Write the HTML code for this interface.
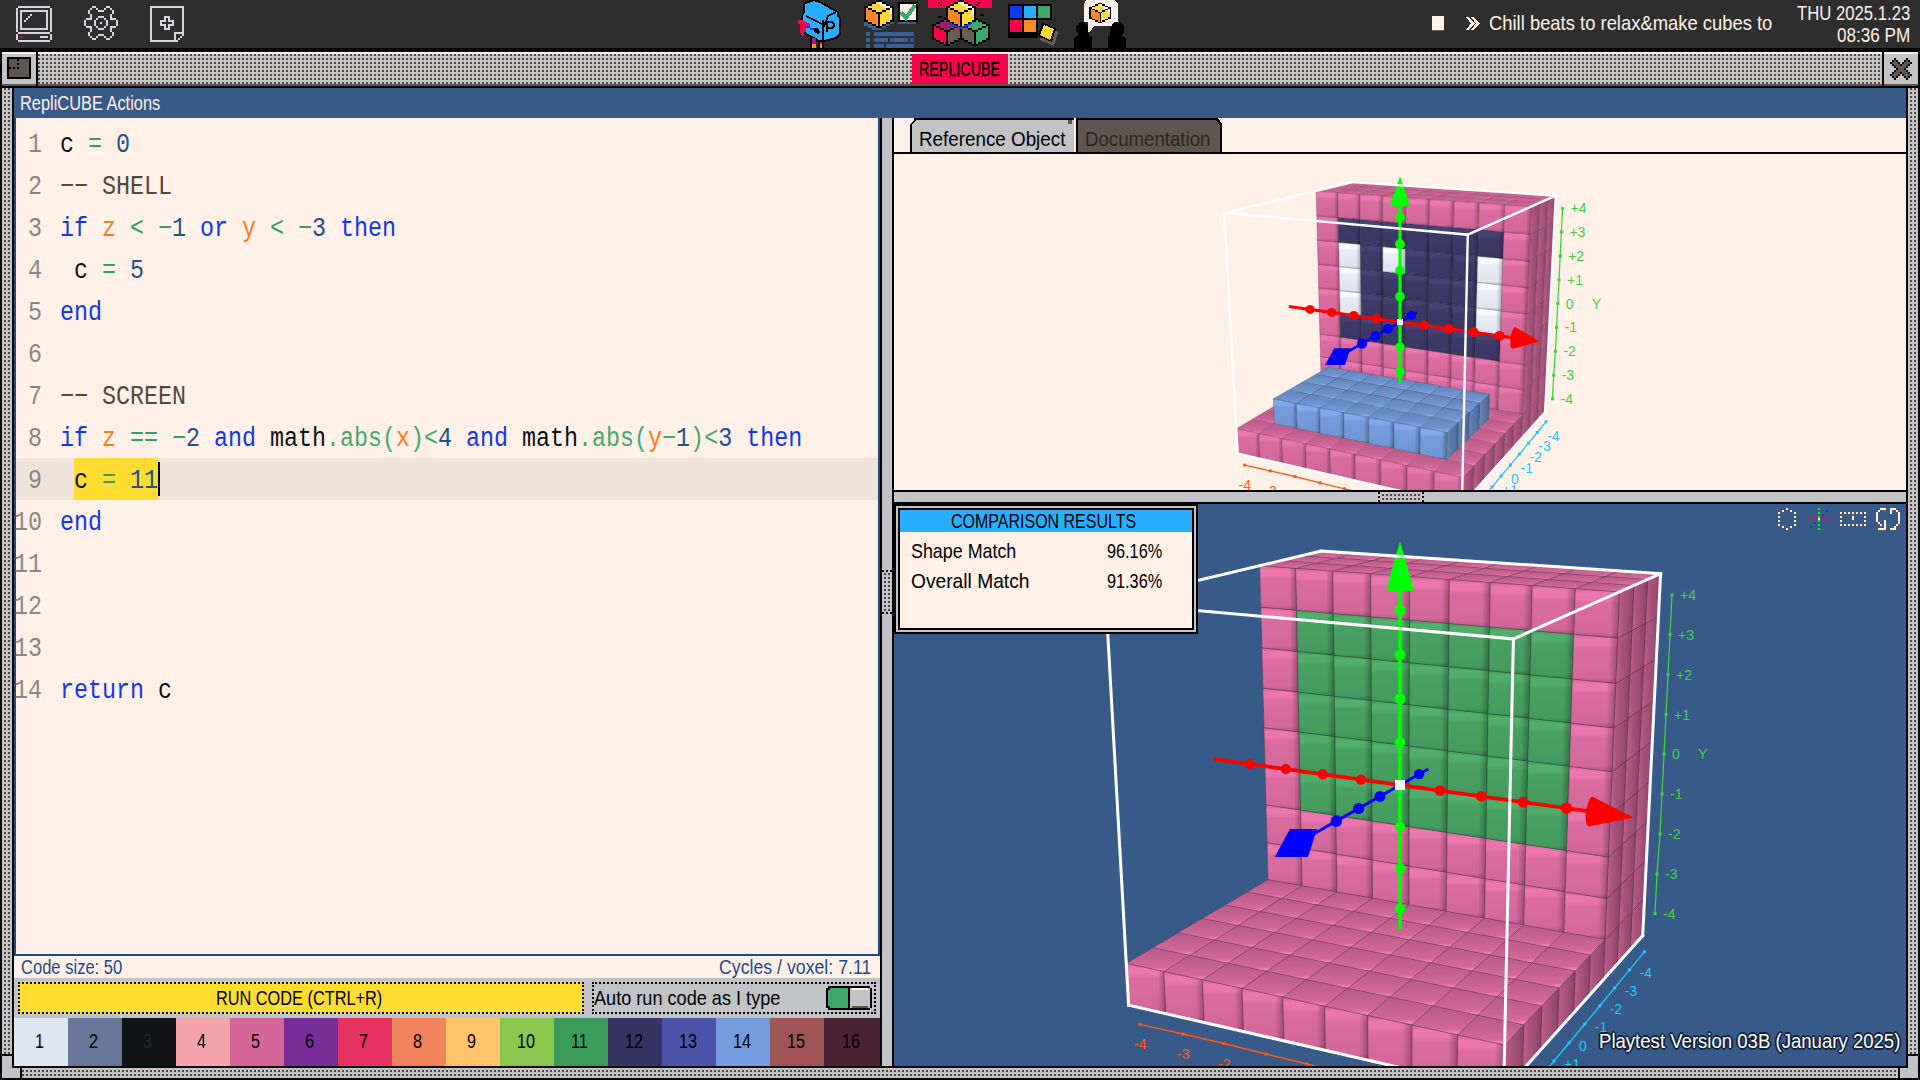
<!DOCTYPE html>
<html><head><meta charset="utf-8">
<style>
*{margin:0;padding:0;box-sizing:border-box}
html,body{width:1920px;height:1080px;overflow:hidden;background:#000}
body{position:relative;font-family:"Liberation Sans",sans-serif}
.abs{position:absolute;display:block}
.dots{background-color:#55493e;background-image:linear-gradient(90deg,#c2c3c7 2px,transparent 2px),linear-gradient(#c2c3c7 2px,transparent 2px);background-size:4px 4px}
.t{position:absolute;white-space:pre;transform-origin:0 0;line-height:1}
.code{position:absolute;left:0;top:0;font-family:"Liberation Mono",monospace;font-size:27px;white-space:pre;line-height:1;transform-origin:0 0}
.kw{color:#1238e6}.nm{color:#24508e}.op{color:#30a060}.vr{color:#ff7a1a}.cm{color:#54483c}.bk{color:#101010}
.ln{color:#8c8682}.op2{color:#48a868}
</style></head><body>
<!-- top bar -->
<div class="abs" style="left:0;top:0;width:1920px;height:48px;background:#2e2e2e"></div>
<svg class="abs" style="left:0;top:0" width="1920" height="48" viewBox="0 0 1920 48" shape-rendering="crispEdges"><rect x="18" y="6" width="32" height="2" fill="#d4d4d8"/><rect x="16" y="8" width="2" height="24" fill="#d4d4d8"/><rect x="50" y="8" width="2" height="24" fill="#d4d4d8"/><rect x="20" y="10" width="28" height="2" fill="#d4d4d8"/><rect x="20" y="28" width="28" height="2" fill="#d4d4d8"/><rect x="20" y="10" width="2" height="20" fill="#d4d4d8"/><rect x="46" y="10" width="2" height="20" fill="#d4d4d8"/><rect x="24" y="20" width="2" height="2" fill="#d4d4d8"/><rect x="26" y="18" width="2" height="2" fill="#d4d4d8"/><rect x="28" y="16" width="2" height="2" fill="#d4d4d8"/><rect x="30" y="14" width="2" height="2" fill="#d4d4d8"/><rect x="18" y="32" width="32" height="2" fill="#d4d4d8"/><rect x="16" y="34" width="2" height="6" fill="#d4d4d8"/><rect x="50" y="34" width="2" height="6" fill="#d4d4d8"/><rect x="18" y="40" width="32" height="2" fill="#d4d4d8"/><rect x="20" y="36" width="2" height="2" fill="#ff004d"/><rect x="40" y="36" width="8" height="2" fill="#d4d4d8"/><rect x="92" y="6" width="4" height="2" fill="#d4d4d8"/><rect x="106" y="6" width="4" height="2" fill="#d4d4d8"/><rect x="90" y="8" width="2" height="2" fill="#d4d4d8"/><rect x="96" y="8" width="2" height="2" fill="#d4d4d8"/><rect x="104" y="8" width="2" height="2" fill="#d4d4d8"/><rect x="110" y="8" width="2" height="2" fill="#d4d4d8"/><rect x="88" y="10" width="2" height="2" fill="#d4d4d8"/><rect x="98" y="10" width="6" height="2" fill="#d4d4d8"/><rect x="112" y="10" width="2" height="2" fill="#d4d4d8"/><rect x="88" y="12" width="2" height="2" fill="#d4d4d8"/><rect x="112" y="12" width="2" height="2" fill="#d4d4d8"/><rect x="90" y="14" width="2" height="2" fill="#d4d4d8"/><rect x="110" y="14" width="2" height="2" fill="#d4d4d8"/><rect x="90" y="16" width="2" height="2" fill="#d4d4d8"/><rect x="98" y="16" width="6" height="2" fill="#d4d4d8"/><rect x="110" y="16" width="2" height="2" fill="#d4d4d8"/><rect x="86" y="18" width="6" height="2" fill="#d4d4d8"/><rect x="96" y="18" width="2" height="2" fill="#d4d4d8"/><rect x="104" y="18" width="2" height="2" fill="#d4d4d8"/><rect x="110" y="18" width="6" height="2" fill="#d4d4d8"/><rect x="84" y="20" width="2" height="2" fill="#d4d4d8"/><rect x="94" y="20" width="2" height="2" fill="#d4d4d8"/><rect x="106" y="20" width="2" height="2" fill="#d4d4d8"/><rect x="116" y="20" width="2" height="2" fill="#d4d4d8"/><rect x="84" y="22" width="2" height="2" fill="#d4d4d8"/><rect x="94" y="22" width="2" height="2" fill="#d4d4d8"/><rect x="100" y="22" width="2" height="2" fill="#d4d4d8"/><rect x="106" y="22" width="2" height="2" fill="#d4d4d8"/><rect x="116" y="22" width="2" height="2" fill="#d4d4d8"/><rect x="84" y="24" width="2" height="2" fill="#d4d4d8"/><rect x="94" y="24" width="2" height="2" fill="#d4d4d8"/><rect x="106" y="24" width="2" height="2" fill="#d4d4d8"/><rect x="116" y="24" width="2" height="2" fill="#d4d4d8"/><rect x="86" y="26" width="6" height="2" fill="#d4d4d8"/><rect x="96" y="26" width="2" height="2" fill="#d4d4d8"/><rect x="104" y="26" width="2" height="2" fill="#d4d4d8"/><rect x="110" y="26" width="6" height="2" fill="#d4d4d8"/><rect x="90" y="28" width="2" height="2" fill="#d4d4d8"/><rect x="98" y="28" width="6" height="2" fill="#d4d4d8"/><rect x="110" y="28" width="2" height="2" fill="#d4d4d8"/><rect x="90" y="30" width="2" height="2" fill="#d4d4d8"/><rect x="110" y="30" width="2" height="2" fill="#d4d4d8"/><rect x="88" y="32" width="2" height="2" fill="#d4d4d8"/><rect x="112" y="32" width="2" height="2" fill="#d4d4d8"/><rect x="88" y="34" width="2" height="2" fill="#d4d4d8"/><rect x="98" y="34" width="6" height="2" fill="#d4d4d8"/><rect x="112" y="34" width="2" height="2" fill="#d4d4d8"/><rect x="90" y="36" width="2" height="2" fill="#d4d4d8"/><rect x="96" y="36" width="2" height="2" fill="#d4d4d8"/><rect x="104" y="36" width="2" height="2" fill="#d4d4d8"/><rect x="110" y="36" width="2" height="2" fill="#d4d4d8"/><rect x="92" y="38" width="4" height="2" fill="#d4d4d8"/><rect x="106" y="38" width="4" height="2" fill="#d4d4d8"/><rect x="150" y="6" width="34" height="2" fill="#d4d4d8"/><rect x="150" y="8" width="2" height="34" fill="#d4d4d8"/><rect x="182" y="8" width="2" height="26" fill="#d4d4d8"/><rect x="152" y="40" width="26" height="2" fill="#d4d4d8"/><rect x="174" y="32" width="8" height="2" fill="#d4d4d8"/><rect x="174" y="34" width="2" height="6" fill="#d4d4d8"/><rect x="182" y="34" width="2" height="2" fill="#d4d4d8"/><rect x="180" y="36" width="2" height="2" fill="#d4d4d8"/><rect x="178" y="38" width="2" height="2" fill="#d4d4d8"/><rect x="176" y="40" width="2" height="2" fill="#d4d4d8"/><rect x="162" y="20" width="2" height="2" fill="#d4d4d8"/><rect x="164" y="18" width="2" height="2" fill="#d4d4d8"/><rect x="164" y="24" width="2" height="2" fill="#d4d4d8"/><rect x="168" y="18" width="2" height="2" fill="#d4d4d8"/><rect x="172" y="24" width="2" height="2" fill="#d4d4d8"/><rect x="168" y="24" width="2" height="2" fill="#d4d4d8"/><rect x="160" y="22" width="2" height="2" fill="#d4d4d8"/><rect x="170" y="20" width="2" height="2" fill="#d4d4d8"/><rect x="164" y="16" width="2" height="2" fill="#d4d4d8"/><rect x="162" y="24" width="2" height="2" fill="#d4d4d8"/><rect x="168" y="16" width="2" height="2" fill="#d4d4d8"/><rect x="164" y="28" width="2" height="2" fill="#d4d4d8"/><rect x="168" y="28" width="2" height="2" fill="#d4d4d8"/><rect x="172" y="22" width="2" height="2" fill="#d4d4d8"/><rect x="160" y="20" width="2" height="2" fill="#d4d4d8"/><rect x="170" y="24" width="2" height="2" fill="#d4d4d8"/><rect x="164" y="20" width="2" height="2" fill="#d4d4d8"/><rect x="164" y="26" width="2" height="2" fill="#d4d4d8"/><rect x="168" y="20" width="2" height="2" fill="#d4d4d8"/><rect x="166" y="16" width="2" height="2" fill="#d4d4d8"/><rect x="166" y="28" width="2" height="2" fill="#d4d4d8"/><rect x="168" y="26" width="2" height="2" fill="#d4d4d8"/><rect x="172" y="20" width="2" height="2" fill="#d4d4d8"/><rect x="160" y="24" width="2" height="2" fill="#d4d4d8"/><polygon points="804,4 808,2 814,0 820,2 834,10 838,12 838,16 840,18 840,34 836,38 828,40 820,42 814,38 806,34 802,30 802,16 804,12" fill="#29adff" stroke="#000" stroke-width="2" stroke-linejoin="miter"/><path d="M806 16 L822 24 L824 26 L828 16 L836 12 M823 20 L823 40" stroke="#000" stroke-width="2" fill="none"/><path d="M827 32 V22 H832 L834 24 V26 L832 28 H828" stroke="#000" stroke-width="2" fill="none"/><polygon points="814,28 818,28 820,32 818,34 814,32" fill="#000" /><polygon points="798,20 802,20 806,22 810,24 810,26 806,26 806,32 804,32 804,36 802,36 800,32 800,24 798,24" fill="#ff004d" /><rect x="806" y="26" width="4" height="2" fill="#0a3cf0"/><rect x="810" y="28" width="4" height="2" fill="#0a3cf0"/><rect x="810" y="38" width="6" height="10" fill="#000"/><rect x="812" y="38" width="4" height="6" fill="#9a2070"/><rect x="812" y="44" width="4" height="4" fill="#ff8a20"/><rect x="818" y="40" width="6" height="8" fill="#000"/><rect x="820" y="42" width="2" height="2" fill="#9a2070"/><rect x="820" y="44" width="2" height="4" fill="#ff8a20"/><rect x="876" y="0" width="6" height="2" fill="#000"/><rect x="872" y="2" width="4" height="2" fill="#000"/><rect x="876" y="2" width="2" height="2" fill="#ffd93a"/><rect x="878" y="2" width="4" height="2" fill="#fff1e8"/><rect x="882" y="2" width="4" height="2" fill="#000"/><rect x="868" y="4" width="4" height="2" fill="#000"/><rect x="872" y="4" width="8" height="2" fill="#ffd93a"/><rect x="880" y="4" width="6" height="2" fill="#fff1e8"/><rect x="886" y="4" width="4" height="2" fill="#000"/><rect x="864" y="6" width="4" height="2" fill="#000"/><rect x="868" y="6" width="16" height="2" fill="#ffd93a"/><rect x="884" y="6" width="6" height="2" fill="#fff1e8"/><rect x="890" y="6" width="4" height="2" fill="#000"/><rect x="864" y="8" width="2" height="2" fill="#000"/><rect x="866" y="8" width="2" height="2" fill="#ff8526"/><rect x="868" y="8" width="4" height="2" fill="#000"/><rect x="872" y="8" width="14" height="2" fill="#ffd93a"/><rect x="886" y="8" width="4" height="2" fill="#000"/><rect x="890" y="8" width="2" height="2" fill="#fff1e8"/><rect x="892" y="8" width="2" height="2" fill="#000"/><rect x="864" y="10" width="2" height="2" fill="#000"/><rect x="866" y="10" width="6" height="2" fill="#ff8526"/><rect x="872" y="10" width="4" height="2" fill="#000"/><rect x="876" y="10" width="6" height="2" fill="#ffd93a"/><rect x="882" y="10" width="4" height="2" fill="#000"/><rect x="886" y="10" width="4" height="2" fill="#ffd93a"/><rect x="890" y="10" width="2" height="2" fill="#fff1e8"/><rect x="892" y="10" width="2" height="2" fill="#000"/><rect x="864" y="12" width="2" height="2" fill="#000"/><rect x="866" y="12" width="10" height="2" fill="#ff8526"/><rect x="876" y="12" width="6" height="2" fill="#000"/><rect x="882" y="12" width="8" height="2" fill="#ffd93a"/><rect x="890" y="12" width="2" height="2" fill="#fff1e8"/><rect x="892" y="12" width="2" height="2" fill="#000"/><rect x="864" y="14" width="2" height="2" fill="#000"/><rect x="866" y="14" width="12" height="2" fill="#ff8526"/><rect x="878" y="14" width="2" height="2" fill="#000"/><rect x="880" y="14" width="12" height="2" fill="#ffd93a"/><rect x="892" y="14" width="2" height="2" fill="#000"/><rect x="864" y="16" width="2" height="2" fill="#000"/><rect x="866" y="16" width="12" height="2" fill="#ff8526"/><rect x="878" y="16" width="2" height="2" fill="#000"/><rect x="880" y="16" width="12" height="2" fill="#ffd93a"/><rect x="892" y="16" width="2" height="2" fill="#000"/><rect x="864" y="18" width="2" height="2" fill="#000"/><rect x="866" y="18" width="12" height="2" fill="#ff8526"/><rect x="878" y="18" width="2" height="2" fill="#000"/><rect x="880" y="18" width="12" height="2" fill="#ffd93a"/><rect x="892" y="18" width="2" height="2" fill="#000"/><rect x="864" y="20" width="4" height="2" fill="#000"/><rect x="868" y="20" width="10" height="2" fill="#ff8526"/><rect x="878" y="20" width="2" height="2" fill="#000"/><rect x="880" y="20" width="10" height="2" fill="#ffd93a"/><rect x="890" y="20" width="4" height="2" fill="#000"/><rect x="864" y="22" width="4" height="2" fill="#3a5f95"/><rect x="868" y="22" width="4" height="2" fill="#000"/><rect x="872" y="22" width="6" height="2" fill="#ff8526"/><rect x="878" y="22" width="2" height="2" fill="#000"/><rect x="880" y="22" width="6" height="2" fill="#ffd93a"/><rect x="886" y="22" width="4" height="2" fill="#000"/><rect x="890" y="22" width="4" height="2" fill="#3a5f95"/><rect x="864" y="24" width="8" height="2" fill="#3a5f95"/><rect x="872" y="24" width="4" height="2" fill="#000"/><rect x="876" y="24" width="2" height="2" fill="#ff8526"/><rect x="878" y="24" width="2" height="2" fill="#000"/><rect x="880" y="24" width="2" height="2" fill="#ffd93a"/><rect x="882" y="24" width="4" height="2" fill="#000"/><rect x="886" y="24" width="4" height="2" fill="#3a5f95"/><rect x="868" y="26" width="8" height="2" fill="#3a5f95"/><rect x="876" y="26" width="6" height="2" fill="#000"/><rect x="882" y="26" width="4" height="2" fill="#3a5f95"/><rect x="872" y="28" width="10" height="2" fill="#3a5f95"/><rect x="898" y="2" width="20" height="20" fill="#000"/><rect x="900" y="4" width="16" height="16" fill="#fff1e8"/><path d="M901 12 L906 18 L915 5" stroke="#3ca86a" stroke-width="4" fill="none"/><rect x="898" y="22" width="18" height="2" fill="#3a5f95"/><rect x="866" y="32" width="4" height="4" fill="#3a5f95"/><rect x="874" y="32" width="40" height="4" fill="#3a5f95"/><rect x="866" y="38" width="4" height="4" fill="#3a5f95"/><rect x="874" y="38" width="14" height="4" fill="#3a5f95"/><rect x="890" y="38" width="18" height="4" fill="#3a5f95"/><rect x="910" y="38" width="4" height="4" fill="#3a5f95"/><rect x="866" y="44" width="4" height="4" fill="#3a5f95"/><rect x="874" y="44" width="10" height="4" fill="#3a5f95"/><rect x="886" y="44" width="28" height="4" fill="#3a5f95"/><rect x="928" y="0" width="64" height="8" fill="#ff004d"/><rect x="938" y="2" width="2" height="2" fill="#000"/><rect x="940" y="4" width="2" height="2" fill="#000"/><rect x="978" y="2" width="2" height="2" fill="#000"/><rect x="976" y="4" width="2" height="2" fill="#000"/><rect x="938" y="16" width="4" height="2" fill="#000"/><rect x="980" y="14" width="4" height="2" fill="#000"/><rect x="944" y="18" width="6" height="2" fill="#000"/><rect x="940" y="20" width="4" height="2" fill="#000"/><rect x="944" y="20" width="2" height="2" fill="#9a2070"/><rect x="946" y="20" width="4" height="2" fill="#ff004d"/><rect x="950" y="20" width="4" height="2" fill="#000"/><rect x="936" y="22" width="4" height="2" fill="#000"/><rect x="940" y="22" width="8" height="2" fill="#9a2070"/><rect x="948" y="22" width="6" height="2" fill="#ff004d"/><rect x="954" y="22" width="4" height="2" fill="#000"/><rect x="932" y="24" width="4" height="2" fill="#000"/><rect x="936" y="24" width="16" height="2" fill="#9a2070"/><rect x="952" y="24" width="6" height="2" fill="#ff004d"/><rect x="958" y="24" width="4" height="2" fill="#000"/><rect x="932" y="26" width="2" height="2" fill="#000"/><rect x="934" y="26" width="2" height="2" fill="#ff004d"/><rect x="936" y="26" width="4" height="2" fill="#000"/><rect x="940" y="26" width="14" height="2" fill="#9a2070"/><rect x="954" y="26" width="4" height="2" fill="#000"/><rect x="958" y="26" width="2" height="2" fill="#ff004d"/><rect x="960" y="26" width="2" height="2" fill="#000"/><rect x="932" y="28" width="2" height="2" fill="#000"/><rect x="934" y="28" width="6" height="2" fill="#ff004d"/><rect x="940" y="28" width="4" height="2" fill="#000"/><rect x="944" y="28" width="6" height="2" fill="#9a2070"/><rect x="950" y="28" width="4" height="2" fill="#000"/><rect x="954" y="28" width="4" height="2" fill="#6a5f55"/><rect x="958" y="28" width="2" height="2" fill="#ff004d"/><rect x="960" y="28" width="2" height="2" fill="#000"/><rect x="932" y="30" width="2" height="2" fill="#000"/><rect x="934" y="30" width="10" height="2" fill="#ff004d"/><rect x="944" y="30" width="6" height="2" fill="#000"/><rect x="950" y="30" width="8" height="2" fill="#6a5f55"/><rect x="958" y="30" width="2" height="2" fill="#ff004d"/><rect x="960" y="30" width="2" height="2" fill="#000"/><rect x="932" y="32" width="2" height="2" fill="#000"/><rect x="934" y="32" width="12" height="2" fill="#ff004d"/><rect x="946" y="32" width="2" height="2" fill="#000"/><rect x="948" y="32" width="12" height="2" fill="#6a5f55"/><rect x="960" y="32" width="2" height="2" fill="#000"/><rect x="932" y="34" width="2" height="2" fill="#000"/><rect x="934" y="34" width="12" height="2" fill="#ff004d"/><rect x="946" y="34" width="2" height="2" fill="#000"/><rect x="948" y="34" width="12" height="2" fill="#6a5f55"/><rect x="960" y="34" width="2" height="2" fill="#000"/><rect x="932" y="36" width="2" height="2" fill="#000"/><rect x="934" y="36" width="12" height="2" fill="#ff004d"/><rect x="946" y="36" width="2" height="2" fill="#000"/><rect x="948" y="36" width="12" height="2" fill="#6a5f55"/><rect x="960" y="36" width="2" height="2" fill="#000"/><rect x="932" y="38" width="4" height="2" fill="#000"/><rect x="936" y="38" width="10" height="2" fill="#ff004d"/><rect x="946" y="38" width="2" height="2" fill="#000"/><rect x="948" y="38" width="10" height="2" fill="#6a5f55"/><rect x="958" y="38" width="4" height="2" fill="#000"/><rect x="936" y="40" width="4" height="2" fill="#000"/><rect x="940" y="40" width="6" height="2" fill="#ff004d"/><rect x="946" y="40" width="2" height="2" fill="#000"/><rect x="948" y="40" width="6" height="2" fill="#6a5f55"/><rect x="954" y="40" width="4" height="2" fill="#000"/><rect x="940" y="42" width="4" height="2" fill="#000"/><rect x="944" y="42" width="2" height="2" fill="#ff004d"/><rect x="946" y="42" width="2" height="2" fill="#000"/><rect x="948" y="42" width="2" height="2" fill="#6a5f55"/><rect x="950" y="42" width="4" height="2" fill="#000"/><rect x="944" y="44" width="6" height="2" fill="#000"/><rect x="972" y="18" width="6" height="2" fill="#000"/><rect x="968" y="20" width="4" height="2" fill="#000"/><rect x="972" y="20" width="2" height="2" fill="#3ca86a"/><rect x="974" y="20" width="4" height="2" fill="#3ca86a"/><rect x="978" y="20" width="4" height="2" fill="#000"/><rect x="964" y="22" width="4" height="2" fill="#000"/><rect x="968" y="22" width="8" height="2" fill="#3ca86a"/><rect x="976" y="22" width="6" height="2" fill="#3ca86a"/><rect x="982" y="22" width="4" height="2" fill="#000"/><rect x="960" y="24" width="4" height="2" fill="#000"/><rect x="964" y="24" width="16" height="2" fill="#3ca86a"/><rect x="980" y="24" width="6" height="2" fill="#3ca86a"/><rect x="986" y="24" width="4" height="2" fill="#000"/><rect x="960" y="26" width="2" height="2" fill="#000"/><rect x="962" y="26" width="2" height="2" fill="#6a5f55"/><rect x="964" y="26" width="4" height="2" fill="#000"/><rect x="968" y="26" width="14" height="2" fill="#3ca86a"/><rect x="982" y="26" width="4" height="2" fill="#000"/><rect x="986" y="26" width="2" height="2" fill="#3ca86a"/><rect x="988" y="26" width="2" height="2" fill="#000"/><rect x="960" y="28" width="2" height="2" fill="#000"/><rect x="962" y="28" width="6" height="2" fill="#6a5f55"/><rect x="968" y="28" width="4" height="2" fill="#000"/><rect x="972" y="28" width="6" height="2" fill="#3ca86a"/><rect x="978" y="28" width="4" height="2" fill="#000"/><rect x="982" y="28" width="4" height="2" fill="#3ca86a"/><rect x="986" y="28" width="2" height="2" fill="#3ca86a"/><rect x="988" y="28" width="2" height="2" fill="#000"/><rect x="960" y="30" width="2" height="2" fill="#000"/><rect x="962" y="30" width="10" height="2" fill="#6a5f55"/><rect x="972" y="30" width="6" height="2" fill="#000"/><rect x="978" y="30" width="8" height="2" fill="#3ca86a"/><rect x="986" y="30" width="2" height="2" fill="#3ca86a"/><rect x="988" y="30" width="2" height="2" fill="#000"/><rect x="960" y="32" width="2" height="2" fill="#000"/><rect x="962" y="32" width="12" height="2" fill="#6a5f55"/><rect x="974" y="32" width="2" height="2" fill="#000"/><rect x="976" y="32" width="12" height="2" fill="#3ca86a"/><rect x="988" y="32" width="2" height="2" fill="#000"/><rect x="960" y="34" width="2" height="2" fill="#000"/><rect x="962" y="34" width="12" height="2" fill="#6a5f55"/><rect x="974" y="34" width="2" height="2" fill="#000"/><rect x="976" y="34" width="12" height="2" fill="#3ca86a"/><rect x="988" y="34" width="2" height="2" fill="#000"/><rect x="960" y="36" width="2" height="2" fill="#000"/><rect x="962" y="36" width="12" height="2" fill="#6a5f55"/><rect x="974" y="36" width="2" height="2" fill="#000"/><rect x="976" y="36" width="12" height="2" fill="#3ca86a"/><rect x="988" y="36" width="2" height="2" fill="#000"/><rect x="960" y="38" width="4" height="2" fill="#000"/><rect x="964" y="38" width="10" height="2" fill="#6a5f55"/><rect x="974" y="38" width="2" height="2" fill="#000"/><rect x="976" y="38" width="10" height="2" fill="#3ca86a"/><rect x="986" y="38" width="4" height="2" fill="#000"/><rect x="964" y="40" width="4" height="2" fill="#000"/><rect x="968" y="40" width="6" height="2" fill="#6a5f55"/><rect x="974" y="40" width="2" height="2" fill="#000"/><rect x="976" y="40" width="6" height="2" fill="#3ca86a"/><rect x="982" y="40" width="4" height="2" fill="#000"/><rect x="968" y="42" width="4" height="2" fill="#000"/><rect x="972" y="42" width="2" height="2" fill="#6a5f55"/><rect x="974" y="42" width="2" height="2" fill="#000"/><rect x="976" y="42" width="2" height="2" fill="#3ca86a"/><rect x="978" y="42" width="4" height="2" fill="#000"/><rect x="972" y="44" width="6" height="2" fill="#000"/><rect x="958" y="0" width="6" height="2" fill="#000"/><rect x="954" y="2" width="4" height="2" fill="#000"/><rect x="958" y="2" width="2" height="2" fill="#ffd93a"/><rect x="960" y="2" width="4" height="2" fill="#fff1e8"/><rect x="964" y="2" width="4" height="2" fill="#000"/><rect x="950" y="4" width="4" height="2" fill="#000"/><rect x="954" y="4" width="8" height="2" fill="#ffd93a"/><rect x="962" y="4" width="6" height="2" fill="#fff1e8"/><rect x="968" y="4" width="4" height="2" fill="#000"/><rect x="946" y="6" width="4" height="2" fill="#000"/><rect x="950" y="6" width="16" height="2" fill="#ffd93a"/><rect x="966" y="6" width="6" height="2" fill="#fff1e8"/><rect x="972" y="6" width="4" height="2" fill="#000"/><rect x="946" y="8" width="2" height="2" fill="#000"/><rect x="948" y="8" width="2" height="2" fill="#ff8526"/><rect x="950" y="8" width="4" height="2" fill="#000"/><rect x="954" y="8" width="14" height="2" fill="#ffd93a"/><rect x="968" y="8" width="4" height="2" fill="#000"/><rect x="972" y="8" width="2" height="2" fill="#fff1e8"/><rect x="974" y="8" width="2" height="2" fill="#000"/><rect x="946" y="10" width="2" height="2" fill="#000"/><rect x="948" y="10" width="6" height="2" fill="#ff8526"/><rect x="954" y="10" width="4" height="2" fill="#000"/><rect x="958" y="10" width="6" height="2" fill="#ffd93a"/><rect x="964" y="10" width="4" height="2" fill="#000"/><rect x="968" y="10" width="4" height="2" fill="#ffd93a"/><rect x="972" y="10" width="2" height="2" fill="#fff1e8"/><rect x="974" y="10" width="2" height="2" fill="#000"/><rect x="946" y="12" width="2" height="2" fill="#000"/><rect x="948" y="12" width="10" height="2" fill="#ff8526"/><rect x="958" y="12" width="6" height="2" fill="#000"/><rect x="964" y="12" width="8" height="2" fill="#ffd93a"/><rect x="972" y="12" width="2" height="2" fill="#fff1e8"/><rect x="974" y="12" width="2" height="2" fill="#000"/><rect x="946" y="14" width="2" height="2" fill="#000"/><rect x="948" y="14" width="12" height="2" fill="#ff8526"/><rect x="960" y="14" width="2" height="2" fill="#000"/><rect x="962" y="14" width="12" height="2" fill="#ffd93a"/><rect x="974" y="14" width="2" height="2" fill="#000"/><rect x="946" y="16" width="2" height="2" fill="#000"/><rect x="948" y="16" width="12" height="2" fill="#ff8526"/><rect x="960" y="16" width="2" height="2" fill="#000"/><rect x="962" y="16" width="12" height="2" fill="#ffd93a"/><rect x="974" y="16" width="2" height="2" fill="#000"/><rect x="946" y="18" width="2" height="2" fill="#000"/><rect x="948" y="18" width="12" height="2" fill="#ff8526"/><rect x="960" y="18" width="2" height="2" fill="#000"/><rect x="962" y="18" width="12" height="2" fill="#ffd93a"/><rect x="974" y="18" width="2" height="2" fill="#000"/><rect x="946" y="20" width="4" height="2" fill="#000"/><rect x="950" y="20" width="10" height="2" fill="#ff8526"/><rect x="960" y="20" width="2" height="2" fill="#000"/><rect x="962" y="20" width="10" height="2" fill="#ffd93a"/><rect x="972" y="20" width="4" height="2" fill="#000"/><rect x="950" y="22" width="4" height="2" fill="#000"/><rect x="954" y="22" width="6" height="2" fill="#ff8526"/><rect x="960" y="22" width="2" height="2" fill="#000"/><rect x="962" y="22" width="6" height="2" fill="#ffd93a"/><rect x="968" y="22" width="4" height="2" fill="#000"/><rect x="954" y="24" width="4" height="2" fill="#000"/><rect x="958" y="24" width="2" height="2" fill="#ff8526"/><rect x="960" y="24" width="2" height="2" fill="#000"/><rect x="962" y="24" width="2" height="2" fill="#ffd93a"/><rect x="964" y="24" width="4" height="2" fill="#000"/><rect x="958" y="26" width="6" height="2" fill="#000"/><path d="M949 23 L955 26 L960 28 L966 26 L972 23" stroke="#0a3cf0" stroke-width="2" fill="none"/><rect x="1008" y="4" width="44" height="34" fill="#000"/><rect x="1010" y="6" width="12" height="12" fill="#0a3cf0"/><rect x="1024" y="6" width="12" height="12" fill="#29adff"/><rect x="1038" y="6" width="12" height="12" fill="#3ca86a"/><rect x="1010" y="20" width="12" height="12" fill="#ff004d"/><rect x="1024" y="20" width="12" height="12" fill="#ff8a20"/><rect x="1038" y="20" width="14" height="18" fill="#2e2e2e"/><polygon points="1044,26 1058,32 1054,46 1040,40" fill="#6a5f55" /><polygon points="1042,22 1056,28 1052,42 1038,36" fill="#000" /><polygon points="1044,25 1054,29 1050,40 1040,35" fill="#ffd93a" /><polygon points="1086,0 1114,0 1118,4 1118,22 1112,26 1094,26 1090,32 1088,32 1088,22 1084,22 1084,4" fill="#fff1e8" /><polygon points="1080,22 1086,22 1088,26 1088,32 1090,36 1092,38 1092,48 1074,48 1074,38 1078,34 1076,30 1076,26" fill="#000" /><polygon points="1114,22 1120,22 1124,26 1124,32 1122,36 1126,38 1126,48 1108,48 1108,38 1110,34 1110,28" fill="#000" /><g transform="translate(1088,3) scale(0.72)"><rect x="14" y="0" width="6" height="2" fill="#000"/><rect x="10" y="2" width="4" height="2" fill="#000"/><rect x="14" y="2" width="2" height="2" fill="#ffd93a"/><rect x="16" y="2" width="4" height="2" fill="#fff1e8"/><rect x="20" y="2" width="4" height="2" fill="#000"/><rect x="6" y="4" width="4" height="2" fill="#000"/><rect x="10" y="4" width="8" height="2" fill="#ffd93a"/><rect x="18" y="4" width="6" height="2" fill="#fff1e8"/><rect x="24" y="4" width="4" height="2" fill="#000"/><rect x="2" y="6" width="4" height="2" fill="#000"/><rect x="6" y="6" width="16" height="2" fill="#ffd93a"/><rect x="22" y="6" width="6" height="2" fill="#fff1e8"/><rect x="28" y="6" width="4" height="2" fill="#000"/><rect x="2" y="8" width="2" height="2" fill="#000"/><rect x="4" y="8" width="2" height="2" fill="#ff8526"/><rect x="6" y="8" width="4" height="2" fill="#000"/><rect x="10" y="8" width="14" height="2" fill="#ffd93a"/><rect x="24" y="8" width="4" height="2" fill="#000"/><rect x="28" y="8" width="2" height="2" fill="#fff1e8"/><rect x="30" y="8" width="2" height="2" fill="#000"/><rect x="2" y="10" width="2" height="2" fill="#000"/><rect x="4" y="10" width="6" height="2" fill="#ff8526"/><rect x="10" y="10" width="4" height="2" fill="#000"/><rect x="14" y="10" width="6" height="2" fill="#ffd93a"/><rect x="20" y="10" width="4" height="2" fill="#000"/><rect x="24" y="10" width="4" height="2" fill="#ffd93a"/><rect x="28" y="10" width="2" height="2" fill="#fff1e8"/><rect x="30" y="10" width="2" height="2" fill="#000"/><rect x="2" y="12" width="2" height="2" fill="#000"/><rect x="4" y="12" width="10" height="2" fill="#ff8526"/><rect x="14" y="12" width="6" height="2" fill="#000"/><rect x="20" y="12" width="8" height="2" fill="#ffd93a"/><rect x="28" y="12" width="2" height="2" fill="#fff1e8"/><rect x="30" y="12" width="2" height="2" fill="#000"/><rect x="2" y="14" width="2" height="2" fill="#000"/><rect x="4" y="14" width="12" height="2" fill="#ff8526"/><rect x="16" y="14" width="2" height="2" fill="#000"/><rect x="18" y="14" width="12" height="2" fill="#ffd93a"/><rect x="30" y="14" width="2" height="2" fill="#000"/><rect x="2" y="16" width="2" height="2" fill="#000"/><rect x="4" y="16" width="12" height="2" fill="#ff8526"/><rect x="16" y="16" width="2" height="2" fill="#000"/><rect x="18" y="16" width="12" height="2" fill="#ffd93a"/><rect x="30" y="16" width="2" height="2" fill="#000"/><rect x="2" y="18" width="2" height="2" fill="#000"/><rect x="4" y="18" width="12" height="2" fill="#ff8526"/><rect x="16" y="18" width="2" height="2" fill="#000"/><rect x="18" y="18" width="12" height="2" fill="#ffd93a"/><rect x="30" y="18" width="2" height="2" fill="#000"/><rect x="2" y="20" width="4" height="2" fill="#000"/><rect x="6" y="20" width="10" height="2" fill="#ff8526"/><rect x="16" y="20" width="2" height="2" fill="#000"/><rect x="18" y="20" width="10" height="2" fill="#ffd93a"/><rect x="28" y="20" width="4" height="2" fill="#000"/><rect x="6" y="22" width="4" height="2" fill="#000"/><rect x="10" y="22" width="6" height="2" fill="#ff8526"/><rect x="16" y="22" width="2" height="2" fill="#000"/><rect x="18" y="22" width="6" height="2" fill="#ffd93a"/><rect x="24" y="22" width="4" height="2" fill="#000"/><rect x="10" y="24" width="4" height="2" fill="#000"/><rect x="14" y="24" width="2" height="2" fill="#ff8526"/><rect x="16" y="24" width="2" height="2" fill="#000"/><rect x="18" y="24" width="2" height="2" fill="#ffd93a"/><rect x="20" y="24" width="4" height="2" fill="#000"/><rect x="14" y="26" width="6" height="2" fill="#000"/></g><rect x="1432" y="16" width="12" height="14" fill="#fff1e8"/><rect x="1432" y="30" width="12" height="1" fill="#6a5f55"/><path d="M1467 17 L1473 23.5 L1467 30 M1472 17 L1478 23.5 L1472 30" stroke="#fff1e8" stroke-width="2.5" fill="none"/></svg>
<!-- title bar -->
<div class="abs" style="left:2px;top:52px;width:34px;height:34px;background:#c2c3c7;border-top:2px solid #fff1e8;border-bottom:2px solid #5f574f"></div>
<div class="abs" style="left:7px;top:57px;width:24px;height:22px;background:#5f574f;border:2px solid #000"></div><svg class="abs" style="left:0;top:0" width="40" height="90" shape-rendering="crispEdges"><path d="M17 59h2v2h-2zM17 63h2v2h-2zM9 67h2v2h-2zM13 67h2v2h-2zM17 67h2v2h-2z" fill="#000"/></svg>
<div class="abs dots" style="left:38px;top:52px;width:1844px;height:34px;border-top:2px solid #fff1e8;border-bottom:2px solid #5f574f;background-position:2px 2px"></div>
<div class="abs" style="left:912px;top:54px;width:96px;height:30px;background:#ff004d"></div>
<div class="abs" style="left:1884px;top:52px;width:34px;height:34px;background:#c2c3c7;border-top:2px solid #fff1e8;border-bottom:2px solid #5f574f"></div>
<svg class="abs" style="left:0;top:0" width="1920" height="90" shape-rendering="crispEdges"><path d="M1894 58h2v2h-2zM1906 58h2v2h-2zM1892 60h2v2h-2zM1896 60h2v2h-2zM1904 60h2v2h-2zM1908 60h2v2h-2zM1890 62h2v2h-2zM1898 62h2v2h-2zM1902 62h2v2h-2zM1910 62h2v2h-2zM1892 64h2v2h-2zM1900 64h2v2h-2zM1908 64h2v2h-2zM1894 66h2v2h-2zM1906 66h2v2h-2zM1896 68h2v2h-2zM1904 68h2v2h-2zM1894 70h2v2h-2zM1906 70h2v2h-2zM1892 72h2v2h-2zM1900 72h2v2h-2zM1908 72h2v2h-2zM1890 74h2v2h-2zM1898 74h2v2h-2zM1902 74h2v2h-2zM1910 74h2v2h-2zM1892 76h2v2h-2zM1896 76h2v2h-2zM1904 76h2v2h-2zM1908 76h2v2h-2zM1894 78h2v2h-2zM1906 78h2v2h-2z" fill="#000"/><path d="M1894 60h2v2h-2zM1906 60h2v2h-2zM1892 62h2v2h-2zM1894 62h2v2h-2zM1896 62h2v2h-2zM1904 62h2v2h-2zM1906 62h2v2h-2zM1908 62h2v2h-2zM1894 64h2v2h-2zM1896 64h2v2h-2zM1898 64h2v2h-2zM1902 64h2v2h-2zM1904 64h2v2h-2zM1906 64h2v2h-2zM1896 66h2v2h-2zM1898 66h2v2h-2zM1900 66h2v2h-2zM1902 66h2v2h-2zM1904 66h2v2h-2zM1898 68h2v2h-2zM1900 68h2v2h-2zM1902 68h2v2h-2zM1896 70h2v2h-2zM1898 70h2v2h-2zM1900 70h2v2h-2zM1902 70h2v2h-2zM1904 70h2v2h-2zM1894 72h2v2h-2zM1896 72h2v2h-2zM1898 72h2v2h-2zM1902 72h2v2h-2zM1904 72h2v2h-2zM1906 72h2v2h-2zM1892 74h2v2h-2zM1894 74h2v2h-2zM1896 74h2v2h-2zM1904 74h2v2h-2zM1906 74h2v2h-2zM1908 74h2v2h-2zM1894 76h2v2h-2zM1906 76h2v2h-2z" fill="#5f574f"/></svg>
<!-- side strips -->
<div class="abs dots" style="left:2px;top:88px;width:10px;height:966px;background-position:0 2px"></div>
<div class="abs dots" style="left:1908px;top:88px;width:10px;height:966px;background-position:0 2px"></div>
<div class="abs" style="left:2px;top:1056px;width:10px;height:22px;background:#c2c3c7"></div>
<div class="abs" style="left:2px;top:1068px;width:18px;height:10px;background:#c2c3c7"></div>
<div class="abs" style="left:1908px;top:1056px;width:10px;height:22px;background:#c2c3c7"></div>
<div class="abs dots" style="left:22px;top:1068px;width:1876px;height:10px;background-position:2px 0"></div>
<div class="abs" style="left:1900px;top:1068px;width:18px;height:10px;background:#c2c3c7"></div>
<!-- header -->
<div class="abs" style="left:14px;top:88px;width:1892px;height:30px;background:#375a88"></div>
<!-- editor -->
<div class="abs" style="left:14px;top:118px;width:866px;height:838px;background:#fff1e8;border-left:2px solid #1e4a8a;border-bottom:2px solid #1e4a8a;border-right:2px solid #1e4a8a"></div>
<div class="abs" style="left:16px;top:458px;width:862px;height:42px;background:#efe3da"></div>
<div class="abs" style="left:74px;top:458px;width:84px;height:42px;background:#ffdc30"></div>
<div class="abs" style="left:158px;top:462px;width:2px;height:34px;background:#000"></div>
<div class="code ln" style="line-height:1;left:14px;top:132.30px;transform:scaleX(0.8642)"> 1</div>
<div class="code" style="line-height:1;left:60px;top:132.30px;transform:scaleX(0.8642)"><span class="bk">c</span> <span class="op">=</span> <span class="nm">0</span></div>
<div class="code ln" style="line-height:1;left:14px;top:174.30px;transform:scaleX(0.8642)"> 2</div>
<div class="code" style="line-height:1;left:60px;top:174.30px;transform:scaleX(0.8642)"><span class="cm">−− SHELL</span></div>
<div class="code ln" style="line-height:1;left:14px;top:216.30px;transform:scaleX(0.8642)"> 3</div>
<div class="code" style="line-height:1;left:60px;top:216.30px;transform:scaleX(0.8642)"><span class="kw">if</span> <span class="vr">z</span> <span class="op">&lt;</span> <span class="op">−</span><span class="nm">1</span> <span class="kw">or</span> <span class="vr">y</span> <span class="op">&lt;</span> <span class="op">−</span><span class="nm">3</span> <span class="kw">then</span></div>
<div class="code ln" style="line-height:1;left:14px;top:258.30px;transform:scaleX(0.8642)"> 4</div>
<div class="code" style="line-height:1;left:60px;top:258.30px;transform:scaleX(0.8642)"> <span class="bk">c</span> <span class="op">=</span> <span class="nm">5</span></div>
<div class="code ln" style="line-height:1;left:14px;top:300.30px;transform:scaleX(0.8642)"> 5</div>
<div class="code" style="line-height:1;left:60px;top:300.30px;transform:scaleX(0.8642)"><span class="kw">end</span></div>
<div class="code ln" style="line-height:1;left:14px;top:342.30px;transform:scaleX(0.8642)"> 6</div>
<div class="code" style="line-height:1;left:60px;top:342.30px;transform:scaleX(0.8642)"></div>
<div class="code ln" style="line-height:1;left:14px;top:384.30px;transform:scaleX(0.8642)"> 7</div>
<div class="code" style="line-height:1;left:60px;top:384.30px;transform:scaleX(0.8642)"><span class="cm">−− SCREEN</span></div>
<div class="code ln" style="line-height:1;left:14px;top:426.30px;transform:scaleX(0.8642)"> 8</div>
<div class="code" style="line-height:1;left:60px;top:426.30px;transform:scaleX(0.8642)"><span class="kw">if</span> <span class="vr">z</span> <span class="op">==</span> <span class="op">−</span><span class="nm">2</span> <span class="kw">and</span> <span class="bk">math</span><span class="op2">.abs(</span><span class="vr">x</span><span class="op2">)&lt;</span><span class="nm">4</span> <span class="kw">and</span> <span class="bk">math</span><span class="op2">.abs(</span><span class="vr">y</span><span class="op2">−</span><span class="nm">1</span><span class="op2">)&lt;</span><span class="nm">3</span> <span class="kw">then</span></div>
<div class="code ln" style="line-height:1;left:14px;top:468.30px;transform:scaleX(0.8642)"> 9</div>
<div class="code" style="line-height:1;left:60px;top:468.30px;transform:scaleX(0.8642)"> <span class="bk">c</span> <span class="op">=</span> <span class="nm">11</span></div>
<div class="code ln" style="line-height:1;left:14px;top:510.30px;transform:scaleX(0.8642)">10</div>
<div class="code" style="line-height:1;left:60px;top:510.30px;transform:scaleX(0.8642)"><span class="kw">end</span></div>
<div class="code ln" style="line-height:1;left:14px;top:552.30px;transform:scaleX(0.8642)">11</div>
<div class="code" style="line-height:1;left:60px;top:552.30px;transform:scaleX(0.8642)"></div>
<div class="code ln" style="line-height:1;left:14px;top:594.30px;transform:scaleX(0.8642)">12</div>
<div class="code" style="line-height:1;left:60px;top:594.30px;transform:scaleX(0.8642)"></div>
<div class="code ln" style="line-height:1;left:14px;top:636.30px;transform:scaleX(0.8642)">13</div>
<div class="code" style="line-height:1;left:60px;top:636.30px;transform:scaleX(0.8642)"></div>
<div class="code ln" style="line-height:1;left:14px;top:678.30px;transform:scaleX(0.8642)">14</div>
<div class="code" style="line-height:1;left:60px;top:678.30px;transform:scaleX(0.8642)"><span class="kw">return</span> <span class="bk">c</span></div>
<!-- status -->
<div class="abs" style="left:14px;top:956px;width:866px;height:22px;background:#fff1e8"></div>
<div class="abs" style="left:14px;top:978px;width:866px;height:40px;background:#c2c3c7"></div>
<div class="abs" style="left:18px;top:982px;width:566px;height:32px;background:#ffdc30;border:2px dotted #000"></div>
<div class="abs" style="left:592px;top:982px;width:284px;height:32px;border:2px dotted #000"></div>
<svg class="abs" style="left:824px;top:984px" width="50" height="28" shape-rendering="crispEdges">
<path d="M4 2h42v2h2v20h-2v2h-42v-2h-2v-20h2z" fill="#000"/>
<path d="M6 4h18v20h-18v-2h-2v-16h2z" fill="#3ca86a"/>
<rect x="24" y="4" width="2" height="20" fill="#000"/>
<rect x="26" y="4" width="20" height="20" fill="#c2c3c7"/>
<rect x="28" y="4" width="16" height="2" fill="#fff1e8"/>
<rect x="28" y="22" width="16" height="2" fill="#5f574f"/>
</svg>
<div class="abs" style="left:14px;top:1018px;width:54px;height:48px;background:#dfe7f3"></div>
<div class="abs" style="left:68px;top:1018px;width:54px;height:48px;background:#68789a"></div>
<div class="abs" style="left:122px;top:1018px;width:54px;height:48px;background:#101416"></div>
<div class="abs" style="left:176px;top:1018px;width:54px;height:48px;background:#f4a4a8"></div>
<div class="abs" style="left:230px;top:1018px;width:54px;height:48px;background:#d4669a"></div>
<div class="abs" style="left:284px;top:1018px;width:54px;height:48px;background:#782c98"></div>
<div class="abs" style="left:338px;top:1018px;width:54px;height:48px;background:#e63262"></div>
<div class="abs" style="left:392px;top:1018px;width:54px;height:48px;background:#f0825c"></div>
<div class="abs" style="left:446px;top:1018px;width:54px;height:48px;background:#ffc46c"></div>
<div class="abs" style="left:500px;top:1018px;width:54px;height:48px;background:#8cc850"></div>
<div class="abs" style="left:554px;top:1018px;width:54px;height:48px;background:#3c9c5c"></div>
<div class="abs" style="left:608px;top:1018px;width:54px;height:48px;background:#363462"></div>
<div class="abs" style="left:662px;top:1018px;width:54px;height:48px;background:#4a54a8"></div>
<div class="abs" style="left:716px;top:1018px;width:54px;height:48px;background:#749cdc"></div>
<div class="abs" style="left:770px;top:1018px;width:54px;height:48px;background:#a05454"></div>
<div class="abs" style="left:824px;top:1018px;width:56px;height:48px;background:#4a2434"></div>
<!-- divider -->
<div class="abs" style="left:882px;top:118px;width:10px;height:948px;background:#c2c3c7"></div>
<div class="abs dots" style="left:882px;top:571px;width:10px;height:42px;background-position:0 0"></div>
<svg class="abs" style="left:882px;top:568px" width="10" height="48" shape-rendering="crispEdges"><path d="M0 2h2v2h-2zM4 2h2v2h-2zM8 2h2v2h-2zM0 44h2v2h-2zM4 44h2v2h-2zM8 44h2v2h-2z" fill="#000"/></svg>
<!-- top view -->
<div class="abs" style="left:894px;top:118px;width:1012px;height:36px;background:#fff1e8"></div>
<svg class="abs" style="left:894px;top:154px" width="1012" height="336" viewBox="0 0 1012 336"><rect width="100%" height="100%" fill="#fff1e8"/><g font-family="Liberation Sans" font-size="14" ><polyline points="668.6,54.4 667.4,78.0 666.2,101.9 665.0,125.9 663.8,149.5 662.6,173.4 661.4,197.3 659.7,221.2 658.5,244.8" fill="none" stroke="#3fd23f" stroke-width="1.3"/><rect x="667.1" y="52.9" width="3" height="3" fill="#3fd23f"/><text x="676.6" y="59.4" fill="#3fd23f">+4</text><rect x="665.9" y="76.5" width="3" height="3" fill="#3fd23f"/><text x="675.4" y="83.0" fill="#3fd23f">+3</text><rect x="664.7" y="100.4" width="3" height="3" fill="#3fd23f"/><text x="674.2" y="106.9" fill="#3fd23f">+2</text><rect x="663.5" y="124.4" width="3" height="3" fill="#3fd23f"/><text x="673.0" y="130.9" fill="#3fd23f">+1</text><rect x="662.3" y="148.0" width="3" height="3" fill="#3fd23f"/><text x="671.8" y="154.5" fill="#3fd23f">0</text><rect x="661.1" y="171.9" width="3" height="3" fill="#3fd23f"/><text x="670.6" y="178.4" fill="#3fd23f">-1</text><rect x="659.9" y="195.8" width="3" height="3" fill="#3fd23f"/><text x="669.4" y="202.3" fill="#3fd23f">-2</text><rect x="658.2" y="219.7" width="3" height="3" fill="#3fd23f"/><text x="667.7" y="226.2" fill="#3fd23f">-3</text><rect x="657.0" y="243.3" width="3" height="3" fill="#3fd23f"/><text x="666.5" y="249.8" fill="#3fd23f">-4</text><text x="697.8" y="154.5" fill="#3fd23f">Y</text><polyline points="652.1,267.7 643.2,278.5 634.3,289.4 625.4,300.1 616.5,310.9 607.0,322.2 598.1,333.0 589.1,343.8" fill="none" stroke="#1ec8ff" stroke-width="1.3"/><rect x="650.6" y="266.2" width="3" height="3" fill="#1ec8ff"/><rect x="641.7" y="277.0" width="3" height="3" fill="#1ec8ff"/><rect x="632.8" y="287.9" width="3" height="3" fill="#1ec8ff"/><rect x="623.9" y="298.6" width="3" height="3" fill="#1ec8ff"/><rect x="615.0" y="309.4" width="3" height="3" fill="#1ec8ff"/><rect x="605.5" y="320.7" width="3" height="3" fill="#1ec8ff"/><rect x="596.6" y="331.5" width="3" height="3" fill="#1ec8ff"/><text x="653.2" y="286.5" fill="#1ec8ff">-4</text><text x="644.3" y="297.4" fill="#1ec8ff">-3</text><text x="635.4" y="308.1" fill="#1ec8ff">-2</text><text x="626.5" y="318.9" fill="#1ec8ff">-1</text><text x="617.0" y="330.2" fill="#1ec8ff">0</text><text x="608.1" y="341.0" fill="#1ec8ff">+1</text><text x="599.1" y="351.8" fill="#1ec8ff">Z</text><polyline points="350.6,311.1 376.3,316.9 400.8,322.5 425.9,328.8 450.4,334.8 475.5,340.8" fill="none" stroke="#ff5a14" stroke-width="1.3"/><rect x="349.1" y="309.6" width="3" height="3" fill="#ff5a14"/><rect x="374.8" y="315.4" width="3" height="3" fill="#ff5a14"/><rect x="399.3" y="321.0" width="3" height="3" fill="#ff5a14"/><rect x="424.4" y="327.3" width="3" height="3" fill="#ff5a14"/><rect x="448.9" y="333.3" width="3" height="3" fill="#ff5a14"/><rect x="474.0" y="339.3" width="3" height="3" fill="#ff5a14"/><text x="344.6" y="336.1" fill="#ff5a14">-4</text><text x="370.3" y="341.9" fill="#ff5a14">-3</text><text x="394.8" y="347.5" fill="#ff5a14">-2</text><text x="419.9" y="353.8" fill="#ff5a14">-1</text><text x="444.4" y="359.8" fill="#ff5a14">0</text><text x="469.5" y="365.8" fill="#ff5a14">+1</text></g><defs><linearGradient id="tz5" x1="0" y1="0" x2="0" y2="1"><stop offset="0" stop-color="#cf6698"/><stop offset="0.1" stop-color="#ed78af"/><stop offset="0.22" stop-color="#e875ac"/><stop offset="0.3" stop-color="#da6ca0"/><stop offset="0.88" stop-color="#d3689b"/><stop offset="1" stop-color="#b25883"/></linearGradient><linearGradient id="ty5" x1="0" y1="0" x2="0" y2="1"><stop offset="0" stop-color="#b75a86"/><stop offset="0.55" stop-color="#ca6494"/><stop offset="0.82" stop-color="#d76a9e"/><stop offset="0.93" stop-color="#f980ba"/><stop offset="1" stop-color="#c86393"/></linearGradient><linearGradient id="tx5" x1="0" y1="0" x2="1" y2="0"><stop offset="0" stop-color="#c86393"/><stop offset="0.25" stop-color="#ae5680"/><stop offset="0.7" stop-color="#9c4d73"/><stop offset="1" stop-color="#874263"/></linearGradient><linearGradient id="tz11" x1="0" y1="0" x2="0" y2="1"><stop offset="0" stop-color="#44985d"/><stop offset="0.1" stop-color="#52af6d"/><stop offset="0.22" stop-color="#4fac6a"/><stop offset="0.3" stop-color="#48a062"/><stop offset="0.88" stop-color="#459b5f"/><stop offset="1" stop-color="#3b8350"/></linearGradient><linearGradient id="ty11" x1="0" y1="0" x2="0" y2="1"><stop offset="0" stop-color="#3c8652"/><stop offset="0.55" stop-color="#42945b"/><stop offset="0.82" stop-color="#479e61"/><stop offset="0.93" stop-color="#59ba75"/><stop offset="1" stop-color="#42935a"/></linearGradient><linearGradient id="tx11" x1="0" y1="0" x2="1" y2="0"><stop offset="0" stop-color="#42935a"/><stop offset="0.25" stop-color="#39804e"/><stop offset="0.7" stop-color="#337346"/><stop offset="1" stop-color="#2c633c"/></linearGradient><linearGradient id="tz12" x1="0" y1="0" x2="0" y2="1"><stop offset="0" stop-color="#3a3762"/><stop offset="0.1" stop-color="#474374"/><stop offset="0.22" stop-color="#454071"/><stop offset="0.3" stop-color="#3e3a68"/><stop offset="0.88" stop-color="#3c3864"/><stop offset="1" stop-color="#322f55"/></linearGradient><linearGradient id="ty12" x1="0" y1="0" x2="0" y2="1"><stop offset="0" stop-color="#343057"/><stop offset="0.55" stop-color="#393560"/><stop offset="0.82" stop-color="#3d3966"/><stop offset="0.93" stop-color="#4e497c"/><stop offset="1" stop-color="#39355f"/></linearGradient><linearGradient id="tx12" x1="0" y1="0" x2="1" y2="0"><stop offset="0" stop-color="#39355f"/><stop offset="0.25" stop-color="#312e53"/><stop offset="0.7" stop-color="#2c294a"/><stop offset="1" stop-color="#262340"/></linearGradient><linearGradient id="tz1" x1="0" y1="0" x2="0" y2="1"><stop offset="0" stop-color="#dce0e9"/><stop offset="0.1" stop-color="#fbffff"/><stop offset="0.22" stop-color="#f7fbff"/><stop offset="0.3" stop-color="#e8ecf6"/><stop offset="0.88" stop-color="#e1e4ee"/><stop offset="1" stop-color="#bec1c9"/></linearGradient><linearGradient id="ty1" x1="0" y1="0" x2="0" y2="1"><stop offset="0" stop-color="#c2c6ce"/><stop offset="0.55" stop-color="#d7dbe4"/><stop offset="0.82" stop-color="#e5e9f3"/><stop offset="0.93" stop-color="#ffffff"/><stop offset="1" stop-color="#d5d9e2"/></linearGradient><linearGradient id="tx1" x1="0" y1="0" x2="1" y2="0"><stop offset="0" stop-color="#d5d9e2"/><stop offset="0.25" stop-color="#b9bcc4"/><stop offset="0.7" stop-color="#a7a9b1"/><stop offset="1" stop-color="#8f9298"/></linearGradient><linearGradient id="tz14" x1="0" y1="0" x2="0" y2="1"><stop offset="0" stop-color="#7094d1"/><stop offset="0.1" stop-color="#83abef"/><stop offset="0.22" stop-color="#7fa7eb"/><stop offset="0.3" stop-color="#769cdc"/><stop offset="0.88" stop-color="#7297d5"/><stop offset="1" stop-color="#607fb4"/></linearGradient><linearGradient id="ty14" x1="0" y1="0" x2="0" y2="1"><stop offset="0" stop-color="#6383b8"/><stop offset="0.55" stop-color="#6d91cc"/><stop offset="0.82" stop-color="#749ad9"/><stop offset="0.93" stop-color="#8bb5fc"/><stop offset="1" stop-color="#6c8fca"/></linearGradient><linearGradient id="tx14" x1="0" y1="0" x2="1" y2="0"><stop offset="0" stop-color="#6c8fca"/><stop offset="0.25" stop-color="#5e7cb0"/><stop offset="0.7" stop-color="#54709e"/><stop offset="1" stop-color="#496088"/></linearGradient><linearGradient id="tr" x1="0" y1="0" x2="1" y2="0"><stop offset="0.8" stop-color="#000" stop-opacity="0"/><stop offset="1" stop-color="#000" stop-opacity="0.28"/></linearGradient></defs>
<polygon points="458.7,28.2 479.3,29.5 468.0,32.4 447.1,31.0" fill="url(#ty5)" stroke="#623048" stroke-width="0.70" stroke-opacity="0.35"/>
<polygon points="427.1,224.6 447.5,228.3 447.0,205.8 426.5,202.4" fill="url(#tz5)" stroke="#623048" stroke-width="0.70" stroke-opacity="0.50"/>
<polygon points="427.1,224.6 447.5,228.3 447.0,205.8 426.5,202.4" fill="url(#tr)"/>
<polygon points="426.5,202.4 447.0,205.8 446.6,183.0 425.9,179.8" fill="url(#tz5)" stroke="#623048" stroke-width="0.70" stroke-opacity="0.50"/>
<polygon points="426.5,202.4 447.0,205.8 446.6,183.0 425.9,179.8" fill="url(#tr)"/>
<polygon points="479.3,29.5 500.3,30.9 489.3,33.8 468.0,32.4" fill="url(#ty5)" stroke="#623048" stroke-width="0.70" stroke-opacity="0.35"/>
<polygon points="427.1,224.6 447.5,228.3 435.3,235.8 414.6,232.0" fill="url(#ty5)" stroke="#623048" stroke-width="0.70" stroke-opacity="0.35"/>
<polygon points="447.5,228.3 468.3,232.0 468.0,209.3 447.0,205.8" fill="url(#tz5)" stroke="#623048" stroke-width="0.70" stroke-opacity="0.50"/>
<polygon points="447.5,228.3 468.3,232.0 468.0,209.3 447.0,205.8" fill="url(#tr)"/>
<polygon points="425.9,179.8 446.6,183.0 446.1,159.8 425.3,156.9" fill="url(#tz5)" stroke="#623048" stroke-width="0.70" stroke-opacity="0.50"/>
<polygon points="425.9,179.8 446.6,183.0 446.1,159.8 425.3,156.9" fill="url(#tr)"/>
<polygon points="447.0,205.8 468.0,209.3 467.7,186.2 446.6,183.0" fill="url(#tz5)" stroke="#623048" stroke-width="0.70" stroke-opacity="0.50"/>
<polygon points="447.0,205.8 468.0,209.3 467.7,186.2 446.6,183.0" fill="url(#tr)"/>
<polygon points="447.1,31.0 468.0,32.4 456.1,35.4 434.9,33.9" fill="url(#ty5)" stroke="#623048" stroke-width="0.70" stroke-opacity="0.35"/>
<polygon points="425.3,156.9 446.1,159.8 445.6,136.3 424.7,133.7" fill="url(#tz5)" stroke="#623048" stroke-width="0.70" stroke-opacity="0.50"/>
<polygon points="425.3,156.9 446.1,159.8 445.6,136.3 424.7,133.7" fill="url(#tr)"/>
<polygon points="500.3,30.9 521.7,32.4 511.2,35.3 489.3,33.8" fill="url(#ty5)" stroke="#623048" stroke-width="0.70" stroke-opacity="0.35"/>
<polygon points="468.3,232.0 489.6,235.7 489.4,212.8 468.0,209.3" fill="url(#tz5)" stroke="#623048" stroke-width="0.70" stroke-opacity="0.50"/>
<polygon points="468.3,232.0 489.6,235.7 489.4,212.8 468.0,209.3" fill="url(#tr)"/>
<polygon points="447.5,228.3 468.3,232.0 456.5,239.7 435.3,235.8" fill="url(#ty5)" stroke="#623048" stroke-width="0.70" stroke-opacity="0.35"/>
<polygon points="651.1,258.1 652.2,235.5 644.7,243.4 643.6,266.5" fill="url(#tx5)" stroke="#623048" stroke-width="0.70" stroke-opacity="0.50"/>
<polygon points="446.6,183.0 467.7,186.2 467.4,162.8 446.1,159.8" fill="url(#tz12)" stroke="#1b1a2e" stroke-width="0.70" stroke-opacity="0.50"/>
<polygon points="446.6,183.0 467.7,186.2 467.4,162.8 446.1,159.8" fill="url(#tr)"/>
<polygon points="424.7,133.7 445.6,136.3 445.2,112.4 424.1,110.0" fill="url(#tz5)" stroke="#623048" stroke-width="0.70" stroke-opacity="0.50"/>
<polygon points="424.7,133.7 445.6,136.3 445.2,112.4 424.1,110.0" fill="url(#tr)"/>
<polygon points="468.0,209.3 489.4,212.8 489.3,189.5 467.7,186.2" fill="url(#tz5)" stroke="#623048" stroke-width="0.70" stroke-opacity="0.50"/>
<polygon points="468.0,209.3 489.4,212.8 489.3,189.5 467.7,186.2" fill="url(#tr)"/>
<polygon points="414.6,232.0 435.3,235.8 422.6,243.7 401.5,239.7" fill="url(#ty5)" stroke="#623048" stroke-width="0.70" stroke-opacity="0.35"/>
<polygon points="468.0,32.4 489.3,33.8 477.9,36.9 456.1,35.4" fill="url(#ty5)" stroke="#623048" stroke-width="0.70" stroke-opacity="0.35"/>
<polygon points="521.7,32.4 543.7,33.8 533.6,36.9 511.2,35.3" fill="url(#ty5)" stroke="#623048" stroke-width="0.70" stroke-opacity="0.35"/>
<polygon points="424.1,110.0 445.2,112.4 444.7,88.2 423.4,86.0" fill="url(#tz5)" stroke="#623048" stroke-width="0.70" stroke-opacity="0.50"/>
<polygon points="424.1,110.0 445.2,112.4 444.7,88.2 423.4,86.0" fill="url(#tr)"/>
<polygon points="489.6,235.7 511.4,239.6 511.4,216.4 489.4,212.8" fill="url(#tz5)" stroke="#623048" stroke-width="0.70" stroke-opacity="0.50"/>
<polygon points="489.6,235.7 511.4,239.6 511.4,216.4 489.4,212.8" fill="url(#tr)"/>
<polygon points="446.1,159.8 467.4,162.8 467.1,139.0 445.6,136.3" fill="url(#tz1)" stroke="#686a6e" stroke-width="0.70" stroke-opacity="0.50"/>
<polygon points="446.1,159.8 467.4,162.8 467.1,139.0 445.6,136.3" fill="url(#tr)"/>
<polygon points="652.2,235.5 653.3,212.6 645.8,220.0 644.7,243.4" fill="url(#tx5)" stroke="#623048" stroke-width="0.70" stroke-opacity="0.50"/>
<polygon points="468.3,232.0 489.6,235.7 478.1,243.6 456.5,239.7" fill="url(#ty5)" stroke="#623048" stroke-width="0.70" stroke-opacity="0.35"/>
<polygon points="423.4,86.0 444.7,88.2 444.2,63.5 422.8,61.7" fill="url(#tz5)" stroke="#623048" stroke-width="0.70" stroke-opacity="0.50"/>
<polygon points="423.4,86.0 444.7,88.2 444.2,63.5 422.8,61.7" fill="url(#tr)"/>
<polygon points="467.7,186.2 489.3,189.5 489.2,165.9 467.4,162.8" fill="url(#tz12)" stroke="#1b1a2e" stroke-width="0.70" stroke-opacity="0.50"/>
<polygon points="467.7,186.2 489.3,189.5 489.2,165.9 467.4,162.8" fill="url(#tr)"/>
<polygon points="445.6,136.3 467.1,139.0 466.8,114.9 445.2,112.4" fill="url(#tz1)" stroke="#686a6e" stroke-width="0.70" stroke-opacity="0.50"/>
<polygon points="445.6,136.3 467.1,139.0 466.8,114.9 445.2,112.4" fill="url(#tr)"/>
<polygon points="489.4,212.8 511.4,216.4 511.4,192.9 489.3,189.5" fill="url(#tz5)" stroke="#623048" stroke-width="0.70" stroke-opacity="0.50"/>
<polygon points="489.4,212.8 511.4,216.4 511.4,192.9 489.3,189.5" fill="url(#tr)"/>
<polygon points="653.3,212.6 654.5,189.3 646.9,196.2 645.8,220.0" fill="url(#tx5)" stroke="#623048" stroke-width="0.70" stroke-opacity="0.50"/>
<polygon points="434.9,33.9 456.1,35.4 443.7,38.5 422.1,36.9" fill="url(#ty5)" stroke="#623048" stroke-width="0.70" stroke-opacity="0.35"/>
<polygon points="422.8,61.7 444.2,63.5 443.7,38.5 422.1,36.9" fill="url(#tz5)" stroke="#623048" stroke-width="0.70" stroke-opacity="0.50"/>
<polygon points="422.8,61.7 444.2,63.5 443.7,38.5 422.1,36.9" fill="url(#tr)"/>
<polygon points="543.7,33.8 566.2,35.3 556.5,38.4 533.6,36.9" fill="url(#ty5)" stroke="#623048" stroke-width="0.70" stroke-opacity="0.35"/>
<polygon points="511.4,239.6 533.7,243.6 533.9,220.1 511.4,216.4" fill="url(#tz5)" stroke="#623048" stroke-width="0.70" stroke-opacity="0.50"/>
<polygon points="511.4,239.6 533.7,243.6 533.9,220.1 511.4,216.4" fill="url(#tr)"/>
<polygon points="489.3,33.8 511.2,35.3 500.1,38.5 477.9,36.9" fill="url(#ty5)" stroke="#623048" stroke-width="0.70" stroke-opacity="0.35"/>
<polygon points="467.4,162.8 489.2,165.9 489.0,141.8 467.1,139.0" fill="url(#tz12)" stroke="#1b1a2e" stroke-width="0.70" stroke-opacity="0.50"/>
<polygon points="467.4,162.8 489.2,165.9 489.0,141.8 467.1,139.0" fill="url(#tr)"/>
<polygon points="445.2,112.4 466.8,114.9 466.5,90.3 444.7,88.2" fill="url(#tz1)" stroke="#686a6e" stroke-width="0.70" stroke-opacity="0.50"/>
<polygon points="445.2,112.4 466.8,114.9 466.5,90.3 444.7,88.2" fill="url(#tr)"/>
<polygon points="489.6,235.7 511.4,239.6 500.3,247.7 478.1,243.6" fill="url(#ty5)" stroke="#623048" stroke-width="0.70" stroke-opacity="0.35"/>
<polygon points="643.6,266.5 644.7,243.4 636.8,251.7 635.8,275.3" fill="url(#tx5)" stroke="#623048" stroke-width="0.70" stroke-opacity="0.50"/>
<polygon points="489.3,189.5 511.4,192.9 511.5,169.0 489.2,165.9" fill="url(#tz12)" stroke="#1b1a2e" stroke-width="0.70" stroke-opacity="0.50"/>
<polygon points="489.3,189.5 511.4,192.9 511.5,169.0 489.2,165.9" fill="url(#tr)"/>
<polygon points="654.5,189.3 655.7,165.7 648.1,172.1 646.9,196.2" fill="url(#tx5)" stroke="#623048" stroke-width="0.70" stroke-opacity="0.50"/>
<polygon points="444.7,88.2 466.5,90.3 466.1,65.4 444.2,63.5" fill="url(#tz12)" stroke="#1b1a2e" stroke-width="0.70" stroke-opacity="0.50"/>
<polygon points="444.7,88.2 466.5,90.3 466.1,65.4 444.2,63.5" fill="url(#tr)"/>
<polygon points="401.5,239.7 422.6,243.7 409.2,252.0 387.8,247.8" fill="url(#ty5)" stroke="#623048" stroke-width="0.70" stroke-opacity="0.35"/>
<polygon points="467.1,139.0 489.0,141.8 488.9,117.4 466.8,114.9" fill="url(#tz12)" stroke="#1b1a2e" stroke-width="0.70" stroke-opacity="0.50"/>
<polygon points="467.1,139.0 489.0,141.8 488.9,117.4 466.8,114.9" fill="url(#tr)"/>
<polygon points="511.4,216.4 533.9,220.1 534.1,196.3 511.4,192.9" fill="url(#tz5)" stroke="#623048" stroke-width="0.70" stroke-opacity="0.50"/>
<polygon points="511.4,216.4 533.9,220.1 534.1,196.3 511.4,192.9" fill="url(#tr)"/>
<polygon points="434.7,212.9 456.1,216.5 443.6,224.1 421.9,220.3" fill="url(#ty14)" stroke="#354663" stroke-width="0.70" stroke-opacity="0.35"/>
<polygon points="566.2,35.3 589.3,36.8 580.0,40.0 556.5,38.4" fill="url(#ty5)" stroke="#623048" stroke-width="0.70" stroke-opacity="0.35"/>
<polygon points="533.7,243.6 556.5,247.6 556.9,223.9 533.9,220.1" fill="url(#tz5)" stroke="#623048" stroke-width="0.70" stroke-opacity="0.50"/>
<polygon points="533.7,243.6 556.5,247.6 556.9,223.9 533.9,220.1" fill="url(#tr)"/>
<polygon points="456.1,35.4 477.9,36.9 465.8,40.1 443.7,38.5" fill="url(#ty5)" stroke="#623048" stroke-width="0.70" stroke-opacity="0.35"/>
<polygon points="444.2,63.5 466.1,65.4 465.8,40.1 443.7,38.5" fill="url(#tz5)" stroke="#623048" stroke-width="0.70" stroke-opacity="0.50"/>
<polygon points="444.2,63.5 466.1,65.4 465.8,40.1 443.7,38.5" fill="url(#tr)"/>
<polygon points="511.2,35.3 533.6,36.9 522.9,40.1 500.1,38.5" fill="url(#ty5)" stroke="#623048" stroke-width="0.70" stroke-opacity="0.35"/>
<polygon points="511.4,239.6 533.7,243.6 523.1,251.9 500.3,247.7" fill="url(#ty5)" stroke="#623048" stroke-width="0.70" stroke-opacity="0.35"/>
<polygon points="644.7,243.4 645.8,220.0 637.9,227.8 636.8,251.7" fill="url(#tx5)" stroke="#623048" stroke-width="0.70" stroke-opacity="0.50"/>
<polygon points="489.2,165.9 511.5,169.0 511.5,144.7 489.0,141.8" fill="url(#tz12)" stroke="#1b1a2e" stroke-width="0.70" stroke-opacity="0.50"/>
<polygon points="489.2,165.9 511.5,169.0 511.5,144.7 489.0,141.8" fill="url(#tr)"/>
<polygon points="655.7,165.7 656.9,141.7 649.2,147.5 648.1,172.1" fill="url(#tx5)" stroke="#623048" stroke-width="0.70" stroke-opacity="0.50"/>
<polygon points="466.8,114.9 488.9,117.4 488.8,92.6 466.5,90.3" fill="url(#tz12)" stroke="#1b1a2e" stroke-width="0.70" stroke-opacity="0.50"/>
<polygon points="466.8,114.9 488.9,117.4 488.8,92.6 466.5,90.3" fill="url(#tr)"/>
<polygon points="511.4,192.9 534.1,196.3 534.3,172.2 511.5,169.0" fill="url(#tz12)" stroke="#1b1a2e" stroke-width="0.70" stroke-opacity="0.50"/>
<polygon points="511.4,192.9 534.1,196.3 534.3,172.2 511.5,169.0" fill="url(#tr)"/>
<polygon points="589.3,36.8 612.9,38.4 604.1,41.7 580.0,40.0" fill="url(#ty5)" stroke="#623048" stroke-width="0.70" stroke-opacity="0.35"/>
<polygon points="533.9,220.1 556.9,223.9 557.4,199.9 534.1,196.3" fill="url(#tz5)" stroke="#623048" stroke-width="0.70" stroke-opacity="0.50"/>
<polygon points="533.9,220.1 556.9,223.9 557.4,199.9 534.1,196.3" fill="url(#tr)"/>
<polygon points="466.5,90.3 488.8,92.6 488.6,67.4 466.1,65.4" fill="url(#tz12)" stroke="#1b1a2e" stroke-width="0.70" stroke-opacity="0.50"/>
<polygon points="466.5,90.3 488.8,92.6 488.6,67.4 466.1,65.4" fill="url(#tr)"/>
<polygon points="556.5,247.6 579.9,251.8 580.6,227.8 556.9,223.9" fill="url(#tz5)" stroke="#623048" stroke-width="0.70" stroke-opacity="0.50"/>
<polygon points="556.5,247.6 579.9,251.8 580.6,227.8 556.9,223.9" fill="url(#tr)"/>
<polygon points="489.0,141.8 511.5,144.7 511.6,120.0 488.9,117.4" fill="url(#tz12)" stroke="#1b1a2e" stroke-width="0.70" stroke-opacity="0.50"/>
<polygon points="489.0,141.8 511.5,144.7 511.6,120.0 488.9,117.4" fill="url(#tr)"/>
<polygon points="656.9,141.7 658.1,117.3 650.4,122.5 649.2,147.5" fill="url(#tx5)" stroke="#623048" stroke-width="0.70" stroke-opacity="0.50"/>
<polygon points="456.1,216.5 477.9,220.2 465.8,228.0 443.6,224.1" fill="url(#ty14)" stroke="#354663" stroke-width="0.70" stroke-opacity="0.35"/>
<polygon points="645.8,220.0 646.9,196.2 639.0,203.5 637.9,227.8" fill="url(#tx5)" stroke="#623048" stroke-width="0.70" stroke-opacity="0.50"/>
<polygon points="533.7,243.6 556.5,247.6 546.4,256.1 523.1,251.9" fill="url(#ty5)" stroke="#623048" stroke-width="0.70" stroke-opacity="0.35"/>
<polygon points="533.6,36.9 556.5,38.4 546.3,41.7 522.9,40.1" fill="url(#ty5)" stroke="#623048" stroke-width="0.70" stroke-opacity="0.35"/>
<polygon points="477.9,36.9 500.1,38.5 488.5,41.7 465.8,40.1" fill="url(#ty5)" stroke="#623048" stroke-width="0.70" stroke-opacity="0.35"/>
<polygon points="466.1,65.4 488.6,67.4 488.5,41.7 465.8,40.1" fill="url(#tz5)" stroke="#623048" stroke-width="0.70" stroke-opacity="0.50"/>
<polygon points="466.1,65.4 488.6,67.4 488.5,41.7 465.8,40.1" fill="url(#tr)"/>
<polygon points="511.5,169.0 534.3,172.2 534.6,147.6 511.5,144.7" fill="url(#tz12)" stroke="#1b1a2e" stroke-width="0.70" stroke-opacity="0.50"/>
<polygon points="511.5,169.0 534.3,172.2 534.6,147.6 511.5,144.7" fill="url(#tr)"/>
<polygon points="488.9,117.4 511.6,120.0 511.6,94.9 488.8,92.6" fill="url(#tz1)" stroke="#686a6e" stroke-width="0.70" stroke-opacity="0.50"/>
<polygon points="488.9,117.4 511.6,120.0 511.6,94.9 488.8,92.6" fill="url(#tr)"/>
<polygon points="658.1,117.3 659.3,92.5 651.6,97.1 650.4,122.5" fill="url(#tx5)" stroke="#623048" stroke-width="0.70" stroke-opacity="0.50"/>
<polygon points="635.8,275.3 636.8,251.7 628.5,260.4 627.5,284.5" fill="url(#tx5)" stroke="#623048" stroke-width="0.70" stroke-opacity="0.50"/>
<polygon points="534.1,196.3 557.4,199.9 557.8,175.4 534.3,172.2" fill="url(#tz12)" stroke="#1b1a2e" stroke-width="0.70" stroke-opacity="0.50"/>
<polygon points="534.1,196.3 557.4,199.9 557.8,175.4 534.3,172.2" fill="url(#tr)"/>
<polygon points="387.8,247.8 409.2,252.0 395.1,260.7 373.4,256.3" fill="url(#ty5)" stroke="#623048" stroke-width="0.70" stroke-opacity="0.35"/>
<polygon points="612.9,38.4 637.0,40.0 628.7,43.4 604.1,41.7" fill="url(#ty5)" stroke="#623048" stroke-width="0.70" stroke-opacity="0.35"/>
<polygon points="579.9,251.8 603.9,256.0 604.8,231.8 580.6,227.8" fill="url(#tz5)" stroke="#623048" stroke-width="0.70" stroke-opacity="0.50"/>
<polygon points="579.9,251.8 603.9,256.0 604.8,231.8 580.6,227.8" fill="url(#tr)"/>
<polygon points="556.9,223.9 580.6,227.8 581.2,203.5 557.4,199.9" fill="url(#tz5)" stroke="#623048" stroke-width="0.70" stroke-opacity="0.50"/>
<polygon points="556.9,223.9 580.6,227.8 581.2,203.5 557.4,199.9" fill="url(#tr)"/>
<polygon points="421.9,220.3 443.6,224.1 430.5,232.1 408.4,228.1" fill="url(#ty14)" stroke="#354663" stroke-width="0.70" stroke-opacity="0.35"/>
<polygon points="646.9,196.2 648.1,172.1 640.1,178.7 639.0,203.5" fill="url(#tx5)" stroke="#623048" stroke-width="0.70" stroke-opacity="0.50"/>
<polygon points="511.5,144.7 534.6,147.6 534.8,122.6 511.6,120.0" fill="url(#tz12)" stroke="#1b1a2e" stroke-width="0.70" stroke-opacity="0.50"/>
<polygon points="511.5,144.7 534.6,147.6 534.8,122.6 511.6,120.0" fill="url(#tr)"/>
<polygon points="488.8,92.6 511.6,94.9 511.7,69.4 488.6,67.4" fill="url(#tz12)" stroke="#1b1a2e" stroke-width="0.70" stroke-opacity="0.50"/>
<polygon points="488.8,92.6 511.6,94.9 511.7,69.4 488.6,67.4" fill="url(#tr)"/>
<polygon points="659.3,92.5 660.5,67.3 652.8,71.3 651.6,97.1" fill="url(#tx5)" stroke="#623048" stroke-width="0.70" stroke-opacity="0.50"/>
<polygon points="556.5,247.6 579.9,251.8 570.2,260.5 546.4,256.1" fill="url(#ty5)" stroke="#623048" stroke-width="0.70" stroke-opacity="0.35"/>
<polygon points="477.9,220.2 500.3,224.0 488.6,232.0 465.8,228.0" fill="url(#ty14)" stroke="#354663" stroke-width="0.70" stroke-opacity="0.35"/>
<polygon points="556.5,38.4 580.0,40.0 570.2,43.4 546.3,41.7" fill="url(#ty5)" stroke="#623048" stroke-width="0.70" stroke-opacity="0.35"/>
<polygon points="534.3,172.2 557.8,175.4 558.2,150.6 534.6,147.6" fill="url(#tz12)" stroke="#1b1a2e" stroke-width="0.70" stroke-opacity="0.50"/>
<polygon points="534.3,172.2 557.8,175.4 558.2,150.6 534.6,147.6" fill="url(#tr)"/>
<polygon points="500.1,38.5 522.9,40.1 511.7,43.4 488.5,41.7" fill="url(#ty5)" stroke="#623048" stroke-width="0.70" stroke-opacity="0.35"/>
<polygon points="488.6,67.4 511.7,69.4 511.7,43.4 488.5,41.7" fill="url(#tz5)" stroke="#623048" stroke-width="0.70" stroke-opacity="0.50"/>
<polygon points="488.6,67.4 511.7,69.4 511.7,43.4 488.5,41.7" fill="url(#tr)"/>
<polygon points="660.5,67.3 661.8,41.6 654.0,45.1 652.8,71.3" fill="url(#tx5)" stroke="#623048" stroke-width="0.70" stroke-opacity="0.50"/>
<polygon points="637.0,40.0 661.8,41.6 654.0,45.1 628.7,43.4" fill="url(#ty5)" stroke="#623048" stroke-width="0.70" stroke-opacity="0.35"/>
<polygon points="636.8,251.7 637.9,227.8 629.6,235.9 628.5,260.4" fill="url(#tx5)" stroke="#623048" stroke-width="0.70" stroke-opacity="0.50"/>
<polygon points="603.9,256.0 628.5,260.4 629.6,235.9 604.8,231.8" fill="url(#tz5)" stroke="#623048" stroke-width="0.70" stroke-opacity="0.50"/>
<polygon points="603.9,256.0 628.5,260.4 629.6,235.9 604.8,231.8" fill="url(#tr)"/>
<polygon points="557.4,199.9 581.2,203.5 581.8,178.8 557.8,175.4" fill="url(#tz12)" stroke="#1b1a2e" stroke-width="0.70" stroke-opacity="0.50"/>
<polygon points="557.4,199.9 581.2,203.5 581.8,178.8 557.8,175.4" fill="url(#tr)"/>
<polygon points="511.6,120.0 534.8,122.6 535.0,97.2 511.6,94.9" fill="url(#tz12)" stroke="#1b1a2e" stroke-width="0.70" stroke-opacity="0.50"/>
<polygon points="511.6,120.0 534.8,122.6 535.0,97.2 511.6,94.9" fill="url(#tr)"/>
<polygon points="580.6,227.8 604.8,231.8 605.6,207.2 581.2,203.5" fill="url(#tz5)" stroke="#623048" stroke-width="0.70" stroke-opacity="0.50"/>
<polygon points="580.6,227.8 604.8,231.8 605.6,207.2 581.2,203.5" fill="url(#tr)"/>
<polygon points="648.1,172.1 649.2,147.5 641.2,153.6 640.1,178.7" fill="url(#tx5)" stroke="#623048" stroke-width="0.70" stroke-opacity="0.50"/>
<polygon points="534.6,147.6 558.2,150.6 558.6,125.3 534.8,122.6" fill="url(#tz12)" stroke="#1b1a2e" stroke-width="0.70" stroke-opacity="0.50"/>
<polygon points="534.6,147.6 558.2,150.6 558.6,125.3 534.8,122.6" fill="url(#tr)"/>
<polygon points="579.9,251.8 603.9,256.0 594.7,265.0 570.2,260.5" fill="url(#ty5)" stroke="#623048" stroke-width="0.70" stroke-opacity="0.35"/>
<polygon points="511.6,94.9 535.0,97.2 535.3,71.4 511.7,69.4" fill="url(#tz12)" stroke="#1b1a2e" stroke-width="0.70" stroke-opacity="0.50"/>
<polygon points="511.6,94.9 535.0,97.2 535.3,71.4 511.7,69.4" fill="url(#tr)"/>
<polygon points="443.6,224.1 465.8,228.0 453.1,236.2 430.5,232.1" fill="url(#ty14)" stroke="#354663" stroke-width="0.70" stroke-opacity="0.35"/>
<polygon points="580.0,40.0 604.1,41.7 594.8,45.1 570.2,43.4" fill="url(#ty5)" stroke="#623048" stroke-width="0.70" stroke-opacity="0.35"/>
<polygon points="557.8,175.4 581.8,178.8 582.4,153.7 558.2,150.6" fill="url(#tz12)" stroke="#1b1a2e" stroke-width="0.70" stroke-opacity="0.50"/>
<polygon points="557.8,175.4 581.8,178.8 582.4,153.7 558.2,150.6" fill="url(#tr)"/>
<polygon points="649.2,147.5 650.4,122.5 642.3,128.0 641.2,153.6" fill="url(#tx5)" stroke="#623048" stroke-width="0.70" stroke-opacity="0.50"/>
<polygon points="500.3,224.0 523.2,227.9 511.9,236.1 488.6,232.0" fill="url(#ty14)" stroke="#354663" stroke-width="0.70" stroke-opacity="0.35"/>
<polygon points="637.9,227.8 639.0,203.5 630.6,211.1 629.6,235.9" fill="url(#tx5)" stroke="#623048" stroke-width="0.70" stroke-opacity="0.50"/>
<polygon points="604.8,231.8 629.6,235.9 630.6,211.1 605.6,207.2" fill="url(#tz5)" stroke="#623048" stroke-width="0.70" stroke-opacity="0.50"/>
<polygon points="604.8,231.8 629.6,235.9 630.6,211.1 605.6,207.2" fill="url(#tr)"/>
<polygon points="581.2,203.5 605.6,207.2 606.4,182.2 581.8,178.8" fill="url(#tz12)" stroke="#1b1a2e" stroke-width="0.70" stroke-opacity="0.50"/>
<polygon points="581.2,203.5 605.6,207.2 606.4,182.2 581.8,178.8" fill="url(#tr)"/>
<polygon points="522.9,40.1 546.3,41.7 535.5,45.1 511.7,43.4" fill="url(#ty5)" stroke="#623048" stroke-width="0.70" stroke-opacity="0.35"/>
<polygon points="511.7,69.4 535.3,71.4 535.5,45.1 511.7,43.4" fill="url(#tz5)" stroke="#623048" stroke-width="0.70" stroke-opacity="0.50"/>
<polygon points="511.7,69.4 535.3,71.4 535.5,45.1 511.7,43.4" fill="url(#tr)"/>
<polygon points="534.8,122.6 558.6,125.3 559.1,99.6 535.0,97.2" fill="url(#tz12)" stroke="#1b1a2e" stroke-width="0.70" stroke-opacity="0.50"/>
<polygon points="534.8,122.6 558.6,125.3 559.1,99.6 535.0,97.2" fill="url(#tr)"/>
<polygon points="373.4,256.3 395.1,260.7 380.4,269.9 358.3,265.3" fill="url(#ty5)" stroke="#623048" stroke-width="0.70" stroke-opacity="0.35"/>
<polygon points="627.5,284.5 628.5,260.4 619.8,269.6 618.9,294.2" fill="url(#tx5)" stroke="#623048" stroke-width="0.70" stroke-opacity="0.50"/>
<polygon points="603.9,256.0 628.5,260.4 619.8,269.6 594.7,265.0" fill="url(#ty5)" stroke="#623048" stroke-width="0.70" stroke-opacity="0.35"/>
<polygon points="650.4,122.5 651.6,97.1 643.5,102.0 642.3,128.0" fill="url(#tx5)" stroke="#623048" stroke-width="0.70" stroke-opacity="0.50"/>
<polygon points="408.4,228.1 430.5,232.1 416.7,240.4 394.2,236.2" fill="url(#ty14)" stroke="#354663" stroke-width="0.70" stroke-opacity="0.35"/>
<polygon points="558.2,150.6 582.4,153.7 583.1,128.1 558.6,125.3" fill="url(#tz12)" stroke="#1b1a2e" stroke-width="0.70" stroke-opacity="0.50"/>
<polygon points="558.2,150.6 582.4,153.7 583.1,128.1 558.6,125.3" fill="url(#tr)"/>
<polygon points="604.1,41.7 628.7,43.4 620.0,46.9 594.8,45.1" fill="url(#ty5)" stroke="#623048" stroke-width="0.70" stroke-opacity="0.35"/>
<polygon points="535.0,97.2 559.1,99.6 559.5,73.5 535.3,71.4" fill="url(#tz12)" stroke="#1b1a2e" stroke-width="0.70" stroke-opacity="0.50"/>
<polygon points="535.0,97.2 559.1,99.6 559.5,73.5 535.3,71.4" fill="url(#tr)"/>
<polygon points="581.8,178.8 606.4,182.2 607.3,156.8 582.4,153.7" fill="url(#tz1)" stroke="#686a6e" stroke-width="0.70" stroke-opacity="0.50"/>
<polygon points="581.8,178.8 606.4,182.2 607.3,156.8 582.4,153.7" fill="url(#tr)"/>
<polygon points="639.0,203.5 640.1,178.7 631.7,185.8 630.6,211.1" fill="url(#tx5)" stroke="#623048" stroke-width="0.70" stroke-opacity="0.50"/>
<polygon points="605.6,207.2 630.6,211.1 631.7,185.8 606.4,182.2" fill="url(#tz5)" stroke="#623048" stroke-width="0.70" stroke-opacity="0.50"/>
<polygon points="605.6,207.2 630.6,211.1 631.7,185.8 606.4,182.2" fill="url(#tr)"/>
<polygon points="465.8,228.0 488.6,232.0 476.3,240.4 453.1,236.2" fill="url(#ty14)" stroke="#354663" stroke-width="0.70" stroke-opacity="0.35"/>
<polygon points="523.2,227.9 546.7,231.9 535.9,240.3 511.9,236.1" fill="url(#ty14)" stroke="#354663" stroke-width="0.70" stroke-opacity="0.35"/>
<polygon points="651.6,97.1 652.8,71.3 644.7,75.6 643.5,102.0" fill="url(#tx5)" stroke="#623048" stroke-width="0.70" stroke-opacity="0.50"/>
<polygon points="558.6,125.3 583.1,128.1 583.7,102.1 559.1,99.6" fill="url(#tz12)" stroke="#1b1a2e" stroke-width="0.70" stroke-opacity="0.50"/>
<polygon points="558.6,125.3 583.1,128.1 583.7,102.1 559.1,99.6" fill="url(#tr)"/>
<polygon points="546.3,41.7 570.2,43.4 560.0,46.9 535.5,45.1" fill="url(#ty5)" stroke="#623048" stroke-width="0.70" stroke-opacity="0.35"/>
<polygon points="535.3,71.4 559.5,73.5 560.0,46.9 535.5,45.1" fill="url(#tz5)" stroke="#623048" stroke-width="0.70" stroke-opacity="0.50"/>
<polygon points="535.3,71.4 559.5,73.5 560.0,46.9 535.5,45.1" fill="url(#tr)"/>
<polygon points="582.4,153.7 607.3,156.8 608.1,130.9 583.1,128.1" fill="url(#tz1)" stroke="#686a6e" stroke-width="0.70" stroke-opacity="0.50"/>
<polygon points="582.4,153.7 607.3,156.8 608.1,130.9 583.1,128.1" fill="url(#tr)"/>
<polygon points="652.8,71.3 654.0,45.1 645.9,48.7 644.7,75.6" fill="url(#tx5)" stroke="#623048" stroke-width="0.70" stroke-opacity="0.50"/>
<polygon points="628.7,43.4 654.0,45.1 645.9,48.7 620.0,46.9" fill="url(#ty5)" stroke="#623048" stroke-width="0.70" stroke-opacity="0.35"/>
<polygon points="640.1,178.7 641.2,153.6 632.7,160.0 631.7,185.8" fill="url(#tx5)" stroke="#623048" stroke-width="0.70" stroke-opacity="0.50"/>
<polygon points="606.4,182.2 631.7,185.8 632.7,160.0 607.3,156.8" fill="url(#tz5)" stroke="#623048" stroke-width="0.70" stroke-opacity="0.50"/>
<polygon points="606.4,182.2 631.7,185.8 632.7,160.0 607.3,156.8" fill="url(#tr)"/>
<polygon points="559.1,99.6 583.7,102.1 584.4,75.6 559.5,73.5" fill="url(#tz12)" stroke="#1b1a2e" stroke-width="0.70" stroke-opacity="0.50"/>
<polygon points="559.1,99.6 583.7,102.1 584.4,75.6 559.5,73.5" fill="url(#tr)"/>
<polygon points="430.5,232.1 453.1,236.2 439.7,244.8 416.7,240.4" fill="url(#ty14)" stroke="#354663" stroke-width="0.70" stroke-opacity="0.35"/>
<polygon points="546.7,231.9 570.8,236.0 560.5,244.6 535.9,240.3" fill="url(#ty14)" stroke="#354663" stroke-width="0.70" stroke-opacity="0.35"/>
<polygon points="488.6,232.0 511.9,236.1 500.1,244.7 476.3,240.4" fill="url(#ty14)" stroke="#354663" stroke-width="0.70" stroke-opacity="0.35"/>
<polygon points="583.1,128.1 608.1,130.9 609.0,104.6 583.7,102.1" fill="url(#tz1)" stroke="#686a6e" stroke-width="0.70" stroke-opacity="0.50"/>
<polygon points="583.1,128.1 608.1,130.9 609.0,104.6 583.7,102.1" fill="url(#tr)"/>
<polygon points="358.3,265.3 380.4,269.9 364.8,279.5 342.3,274.7" fill="url(#ty5)" stroke="#623048" stroke-width="0.70" stroke-opacity="0.35"/>
<polygon points="343.7,299.6 366.0,304.7 364.8,279.5 342.3,274.7" fill="url(#tz5)" stroke="#623048" stroke-width="0.70" stroke-opacity="0.50"/>
<polygon points="343.7,299.6 366.0,304.7 364.8,279.5 342.3,274.7" fill="url(#tr)"/>
<polygon points="570.2,43.4 594.8,45.1 585.1,48.7 560.0,46.9" fill="url(#ty5)" stroke="#623048" stroke-width="0.70" stroke-opacity="0.35"/>
<polygon points="559.5,73.5 584.4,75.6 585.1,48.7 560.0,46.9" fill="url(#tz5)" stroke="#623048" stroke-width="0.70" stroke-opacity="0.50"/>
<polygon points="559.5,73.5 584.4,75.6 585.1,48.7 560.0,46.9" fill="url(#tr)"/>
<polygon points="641.2,153.6 642.3,128.0 633.8,133.9 632.7,160.0" fill="url(#tx5)" stroke="#623048" stroke-width="0.70" stroke-opacity="0.50"/>
<polygon points="607.3,156.8 632.7,160.0 633.8,133.9 608.1,130.9" fill="url(#tz5)" stroke="#623048" stroke-width="0.70" stroke-opacity="0.50"/>
<polygon points="607.3,156.8 632.7,160.0 633.8,133.9 608.1,130.9" fill="url(#tr)"/>
<polygon points="394.2,236.2 416.7,240.4 402.2,249.3 379.3,244.8" fill="url(#ty14)" stroke="#354663" stroke-width="0.70" stroke-opacity="0.35"/>
<polygon points="380.4,269.9 403.0,274.6 402.2,249.3 379.3,244.8" fill="url(#tz14)" stroke="#354663" stroke-width="0.70" stroke-opacity="0.50"/>
<polygon points="380.4,269.9 403.0,274.6 402.2,249.3 379.3,244.8" fill="url(#tr)"/>
<polygon points="583.7,102.1 609.0,104.6 609.9,77.9 584.4,75.6" fill="url(#tz12)" stroke="#1b1a2e" stroke-width="0.70" stroke-opacity="0.50"/>
<polygon points="583.7,102.1 609.0,104.6 609.9,77.9 584.4,75.6" fill="url(#tr)"/>
<polygon points="618.9,294.2 619.8,269.6 610.7,279.2 609.8,304.4" fill="url(#tx5)" stroke="#623048" stroke-width="0.70" stroke-opacity="0.50"/>
<polygon points="594.7,265.0 619.8,269.6 610.7,279.2 585.0,274.4" fill="url(#ty5)" stroke="#623048" stroke-width="0.70" stroke-opacity="0.35"/>
<polygon points="594.7,265.0 595.5,240.2 585.7,249.0 585.0,274.4" fill="url(#tx14)" stroke="#354663" stroke-width="0.70" stroke-opacity="0.50"/>
<polygon points="570.8,236.0 595.5,240.2 585.7,249.0 560.5,244.6" fill="url(#ty14)" stroke="#354663" stroke-width="0.70" stroke-opacity="0.35"/>
<polygon points="642.3,128.0 643.5,102.0 635.0,107.2 633.8,133.9" fill="url(#tx5)" stroke="#623048" stroke-width="0.70" stroke-opacity="0.50"/>
<polygon points="608.1,130.9 633.8,133.9 635.0,107.2 609.0,104.6" fill="url(#tz5)" stroke="#623048" stroke-width="0.70" stroke-opacity="0.50"/>
<polygon points="608.1,130.9 633.8,133.9 635.0,107.2 609.0,104.6" fill="url(#tr)"/>
<polygon points="453.1,236.2 476.3,240.4 463.4,249.2 439.7,244.8" fill="url(#ty14)" stroke="#354663" stroke-width="0.70" stroke-opacity="0.35"/>
<polygon points="594.8,45.1 620.0,46.9 610.8,50.6 585.1,48.7" fill="url(#ty5)" stroke="#623048" stroke-width="0.70" stroke-opacity="0.35"/>
<polygon points="584.4,75.6 609.9,77.9 610.8,50.6 585.1,48.7" fill="url(#tz5)" stroke="#623048" stroke-width="0.70" stroke-opacity="0.50"/>
<polygon points="584.4,75.6 609.9,77.9 610.8,50.6 585.1,48.7" fill="url(#tr)"/>
<polygon points="511.9,236.1 535.9,240.3 524.5,249.1 500.1,244.7" fill="url(#ty14)" stroke="#354663" stroke-width="0.70" stroke-opacity="0.35"/>
<polygon points="643.5,102.0 644.7,75.6 636.1,80.1 635.0,107.2" fill="url(#tx5)" stroke="#623048" stroke-width="0.70" stroke-opacity="0.50"/>
<polygon points="609.0,104.6 635.0,107.2 636.1,80.1 609.9,77.9" fill="url(#tz5)" stroke="#623048" stroke-width="0.70" stroke-opacity="0.50"/>
<polygon points="609.0,104.6 635.0,107.2 636.1,80.1 609.9,77.9" fill="url(#tr)"/>
<polygon points="380.4,269.9 403.0,274.6 387.9,284.5 364.8,279.5" fill="url(#ty5)" stroke="#623048" stroke-width="0.70" stroke-opacity="0.35"/>
<polygon points="366.0,304.7 388.9,310.0 387.9,284.5 364.8,279.5" fill="url(#tz5)" stroke="#623048" stroke-width="0.70" stroke-opacity="0.50"/>
<polygon points="366.0,304.7 388.9,310.0 387.9,284.5 364.8,279.5" fill="url(#tr)"/>
<polygon points="416.7,240.4 439.7,244.8 425.6,253.8 402.2,249.3" fill="url(#ty14)" stroke="#354663" stroke-width="0.70" stroke-opacity="0.35"/>
<polygon points="403.0,274.6 426.3,279.5 425.6,253.8 402.2,249.3" fill="url(#tz14)" stroke="#354663" stroke-width="0.70" stroke-opacity="0.50"/>
<polygon points="403.0,274.6 426.3,279.5 425.6,253.8 402.2,249.3" fill="url(#tr)"/>
<polygon points="644.7,75.6 645.9,48.7 637.2,52.5 636.1,80.1" fill="url(#tx5)" stroke="#623048" stroke-width="0.70" stroke-opacity="0.50"/>
<polygon points="620.0,46.9 645.9,48.7 637.2,52.5 610.8,50.6" fill="url(#ty5)" stroke="#623048" stroke-width="0.70" stroke-opacity="0.35"/>
<polygon points="609.9,77.9 636.1,80.1 637.2,52.5 610.8,50.6" fill="url(#tz5)" stroke="#623048" stroke-width="0.70" stroke-opacity="0.50"/>
<polygon points="609.9,77.9 636.1,80.1 637.2,52.5 610.8,50.6" fill="url(#tr)"/>
<polygon points="535.9,240.3 560.5,244.6 549.6,253.7 524.5,249.1" fill="url(#ty14)" stroke="#354663" stroke-width="0.70" stroke-opacity="0.35"/>
<polygon points="476.3,240.4 500.1,244.7 487.6,253.7 463.4,249.2" fill="url(#ty14)" stroke="#354663" stroke-width="0.70" stroke-opacity="0.35"/>
<polygon points="403.0,274.6 426.3,279.5 411.6,289.6 387.9,284.5" fill="url(#ty5)" stroke="#623048" stroke-width="0.70" stroke-opacity="0.35"/>
<polygon points="388.9,310.0 412.4,315.4 411.6,289.6 387.9,284.5" fill="url(#tz5)" stroke="#623048" stroke-width="0.70" stroke-opacity="0.50"/>
<polygon points="388.9,310.0 412.4,315.4 411.6,289.6 387.9,284.5" fill="url(#tr)"/>
<polygon points="609.8,304.4 610.7,279.2 601.0,289.4 600.1,315.1" fill="url(#tx5)" stroke="#623048" stroke-width="0.70" stroke-opacity="0.50"/>
<polygon points="585.0,274.4 610.7,279.2 601.0,289.4 574.8,284.3" fill="url(#ty5)" stroke="#623048" stroke-width="0.70" stroke-opacity="0.35"/>
<polygon points="585.0,274.4 585.7,249.0 575.4,258.3 574.8,284.3" fill="url(#tx14)" stroke="#354663" stroke-width="0.70" stroke-opacity="0.50"/>
<polygon points="560.5,244.6 585.7,249.0 575.4,258.3 549.6,253.7" fill="url(#ty14)" stroke="#354663" stroke-width="0.70" stroke-opacity="0.35"/>
<polygon points="439.7,244.8 463.4,249.2 449.7,258.5 425.6,253.8" fill="url(#ty14)" stroke="#354663" stroke-width="0.70" stroke-opacity="0.35"/>
<polygon points="426.3,279.5 450.2,284.4 449.7,258.5 425.6,253.8" fill="url(#tz14)" stroke="#354663" stroke-width="0.70" stroke-opacity="0.50"/>
<polygon points="426.3,279.5 450.2,284.4 449.7,258.5 425.6,253.8" fill="url(#tr)"/>
<polygon points="500.1,244.7 524.5,249.1 512.6,258.4 487.6,253.7" fill="url(#ty14)" stroke="#354663" stroke-width="0.70" stroke-opacity="0.35"/>
<polygon points="426.3,279.5 450.2,284.4 435.9,294.9 411.6,289.6" fill="url(#ty5)" stroke="#623048" stroke-width="0.70" stroke-opacity="0.35"/>
<polygon points="412.4,315.4 436.6,321.0 435.9,294.9 411.6,289.6" fill="url(#tz5)" stroke="#623048" stroke-width="0.70" stroke-opacity="0.50"/>
<polygon points="412.4,315.4 436.6,321.0 435.9,294.9 411.6,289.6" fill="url(#tr)"/>
<polygon points="463.4,249.2 487.6,253.7 474.5,263.3 449.7,258.5" fill="url(#ty14)" stroke="#354663" stroke-width="0.70" stroke-opacity="0.35"/>
<polygon points="450.2,284.4 474.8,289.5 474.5,263.3 449.7,258.5" fill="url(#tz14)" stroke="#354663" stroke-width="0.70" stroke-opacity="0.50"/>
<polygon points="450.2,284.4 474.8,289.5 474.5,263.3 449.7,258.5" fill="url(#tr)"/>
<polygon points="524.5,249.1 549.6,253.7 538.2,263.2 512.6,258.4" fill="url(#ty14)" stroke="#354663" stroke-width="0.70" stroke-opacity="0.35"/>
<polygon points="600.1,315.1 601.0,289.4 590.8,300.1 590.0,326.5" fill="url(#tx5)" stroke="#623048" stroke-width="0.70" stroke-opacity="0.50"/>
<polygon points="574.8,284.3 601.0,289.4 590.8,300.1 564.0,294.7" fill="url(#ty5)" stroke="#623048" stroke-width="0.70" stroke-opacity="0.35"/>
<polygon points="574.8,284.3 575.4,258.3 564.5,268.2 564.0,294.7" fill="url(#tx14)" stroke="#354663" stroke-width="0.70" stroke-opacity="0.50"/>
<polygon points="549.6,253.7 575.4,258.3 564.5,268.2 538.2,263.2" fill="url(#ty14)" stroke="#354663" stroke-width="0.70" stroke-opacity="0.35"/>
<polygon points="450.2,284.4 474.8,289.5 461.0,300.3 435.9,294.9" fill="url(#ty5)" stroke="#623048" stroke-width="0.70" stroke-opacity="0.35"/>
<polygon points="436.6,321.0 461.4,326.7 461.0,300.3 435.9,294.9" fill="url(#tz5)" stroke="#623048" stroke-width="0.70" stroke-opacity="0.50"/>
<polygon points="436.6,321.0 461.4,326.7 461.0,300.3 435.9,294.9" fill="url(#tr)"/>
<polygon points="487.6,253.7 512.6,258.4 499.9,268.2 474.5,263.3" fill="url(#ty14)" stroke="#354663" stroke-width="0.70" stroke-opacity="0.35"/>
<polygon points="474.8,289.5 500.0,294.8 499.9,268.2 474.5,263.3" fill="url(#tz14)" stroke="#354663" stroke-width="0.70" stroke-opacity="0.50"/>
<polygon points="474.8,289.5 500.0,294.8 499.9,268.2 474.5,263.3" fill="url(#tr)"/>
<polygon points="474.8,289.5 500.0,294.8 486.7,305.8 461.0,300.3" fill="url(#ty5)" stroke="#623048" stroke-width="0.70" stroke-opacity="0.35"/>
<polygon points="461.4,326.7 486.9,332.6 486.7,305.8 461.0,300.3" fill="url(#tz5)" stroke="#623048" stroke-width="0.70" stroke-opacity="0.50"/>
<polygon points="461.4,326.7 486.9,332.6 486.7,305.8 461.0,300.3" fill="url(#tr)"/>
<polygon points="512.6,258.4 538.2,263.2 526.1,273.3 499.9,268.2" fill="url(#ty14)" stroke="#354663" stroke-width="0.70" stroke-opacity="0.35"/>
<polygon points="500.0,294.8 525.9,300.2 526.1,273.3 499.9,268.2" fill="url(#tz14)" stroke="#354663" stroke-width="0.70" stroke-opacity="0.50"/>
<polygon points="500.0,294.8 525.9,300.2 526.1,273.3 499.9,268.2" fill="url(#tr)"/>
<polygon points="590.0,326.5 590.8,300.1 580.0,311.5 579.3,338.5" fill="url(#tx5)" stroke="#623048" stroke-width="0.70" stroke-opacity="0.50"/>
<polygon points="564.0,294.7 590.8,300.1 580.0,311.5 552.5,305.7" fill="url(#ty5)" stroke="#623048" stroke-width="0.70" stroke-opacity="0.35"/>
<polygon points="564.0,294.7 564.5,268.2 553.0,278.5 552.5,305.7" fill="url(#tx14)" stroke="#354663" stroke-width="0.70" stroke-opacity="0.50"/>
<polygon points="538.2,263.2 564.5,268.2 553.0,278.5 526.1,273.3" fill="url(#ty14)" stroke="#354663" stroke-width="0.70" stroke-opacity="0.35"/>
<polygon points="525.9,300.2 552.5,305.7 553.0,278.5 526.1,273.3" fill="url(#tz14)" stroke="#354663" stroke-width="0.70" stroke-opacity="0.50"/>
<polygon points="525.9,300.2 552.5,305.7 553.0,278.5 526.1,273.3" fill="url(#tr)"/>
<polygon points="500.0,294.8 525.9,300.2 513.2,311.6 486.7,305.8" fill="url(#ty5)" stroke="#623048" stroke-width="0.70" stroke-opacity="0.35"/>
<polygon points="486.9,332.6 513.1,338.6 513.2,311.6 486.7,305.8" fill="url(#tz5)" stroke="#623048" stroke-width="0.70" stroke-opacity="0.50"/>
<polygon points="486.9,332.6 513.1,338.6 513.2,311.6 486.7,305.8" fill="url(#tr)"/>
<polygon points="525.9,300.2 552.5,305.7 540.5,317.4 513.2,311.6" fill="url(#ty5)" stroke="#623048" stroke-width="0.70" stroke-opacity="0.35"/>
<polygon points="513.1,338.6 540.1,344.8 540.5,317.4 513.2,311.6" fill="url(#tz5)" stroke="#623048" stroke-width="0.70" stroke-opacity="0.50"/>
<polygon points="513.1,338.6 540.1,344.8 540.5,317.4 513.2,311.6" fill="url(#tr)"/>
<polygon points="579.3,338.5 580.0,311.5 568.5,323.5 567.9,351.2" fill="url(#tx5)" stroke="#623048" stroke-width="0.70" stroke-opacity="0.50"/>
<polygon points="552.5,305.7 580.0,311.5 568.5,323.5 540.5,317.4" fill="url(#ty5)" stroke="#623048" stroke-width="0.70" stroke-opacity="0.35"/>
<polygon points="540.1,344.8 567.9,351.2 568.5,323.5 540.5,317.4" fill="url(#tz5)" stroke="#623048" stroke-width="0.70" stroke-opacity="0.50"/>
<polygon points="540.1,344.8 567.9,351.2 568.5,323.5 540.5,317.4" fill="url(#tr)"/><line x1="506.0" y1="229.9" x2="506.0" y2="47.0" stroke="#00ff00" stroke-width="3.2"/>
<circle cx="506.0" cy="217.8" r="4.7" fill="#00ff00"/>
<circle cx="506.0" cy="193.1" r="4.7" fill="#00ff00"/>
<circle cx="506.0" cy="142.5" r="4.8" fill="#00ff00"/>
<circle cx="506.0" cy="116.6" r="4.8" fill="#00ff00"/>
<circle cx="506.0" cy="90.2" r="4.9" fill="#00ff00"/>
<circle cx="506.0" cy="63.3" r="4.9" fill="#00ff00"/>
<polygon points="496.0,51.2 506.0,22.2 516.0,51.0 515.9,51.4 515.1,51.8 513.6,52.1 511.6,52.4 509.2,52.6 506.6,52.7 504.0,52.6 501.5,52.5 499.3,52.3 497.6,52.0 496.4,51.6" fill="#00ff00"/>
<line x1="394.9" y1="152.5" x2="621.4" y2="184.1" stroke="#ff0000" stroke-width="3.2"/>
<circle cx="416.1" cy="155.4" r="4.5" fill="#ff0000"/>
<circle cx="437.7" cy="158.5" r="4.6" fill="#ff0000"/>
<circle cx="459.9" cy="161.6" r="4.6" fill="#ff0000"/>
<circle cx="482.7" cy="164.7" r="4.7" fill="#ff0000"/>
<circle cx="529.9" cy="171.3" r="4.8" fill="#ff0000"/>
<circle cx="554.5" cy="174.8" r="4.9" fill="#ff0000"/>
<circle cx="579.7" cy="178.3" r="4.9" fill="#ff0000"/>
<circle cx="605.5" cy="181.9" r="5.0" fill="#ff0000"/>
<polygon points="645.6,187.5 618.7,194.8 617.9,194.5 617.2,193.4 616.6,191.8 616.4,189.5 616.3,186.9 616.6,184.1 617.0,181.2 617.7,178.5 618.5,176.3 619.5,174.5 620.4,173.4 621.4,173.1 622.2,173.4" fill="#ff0000"/>
<line x1="522.9" y1="158.4" x2="446.5" y2="201.8" stroke="#0000ff" stroke-width="2.6"/>
<circle cx="517.4" cy="161.5" r="4.6" fill="#0000ff"/>
<circle cx="494.0" cy="174.8" r="4.9" fill="#0000ff"/>
<circle cx="481.3" cy="182.0" r="5.0" fill="#0000ff"/>
<circle cx="468.0" cy="189.6" r="5.1" fill="#0000ff"/>
<polygon points="431.1,211.1 451.0,211.1 456.4,194.3 440.2,194.3" fill="#0000ff"/>
<rect x="503.0" y="165.0" width="6.0" height="6.0" fill="#fff"/><g stroke="#fff" stroke-width="2.4" stroke-linecap="square"><line x1="458.7" y1="28.2" x2="661.8" y2="41.6"/><line x1="661.8" y1="41.6" x2="573.8" y2="80.7"/><line x1="573.8" y1="80.7" x2="330.2" y2="58.8"/><line x1="458.7" y1="28.2" x2="330.2" y2="58.8"/><line x1="330.2" y1="58.8" x2="343.7" y2="299.6"/><line x1="343.7" y1="299.6" x2="567.9" y2="351.2"/><line x1="573.8" y1="80.7" x2="567.9" y2="351.2"/><line x1="661.8" y1="41.6" x2="651.1" y2="258.1"/><line x1="651.1" y1="258.1" x2="567.9" y2="351.2"/></g></svg>
<div class="abs" style="left:894px;top:492px;width:1012px;height:10px;background:#c2c3c7"></div>
<div class="abs dots" style="left:1380px;top:492px;width:42px;height:10px;background-position:0 0"></div>
<svg class="abs" style="left:1376px;top:492px" width="50" height="10" shape-rendering="crispEdges"><path d="M2 0h2v2h-2zM2 4h2v2h-2zM2 8h2v2h-2zM46 0h2v2h-2zM46 4h2v2h-2zM46 8h2v2h-2z" fill="#000"/></svg>
<svg class="abs" style="left:894px;top:504px" width="1012" height="562" viewBox="0 0 1012 562"><rect width="100%" height="100%" fill="#375a88"/><g font-family="Liberation Sans" font-size="14" ><polyline points="778.0,91.0 776.0,130.5 774.0,170.5 772.0,210.5 770.0,250.0 768.0,290.0 766.0,330.0 763.0,370.0 761.0,409.5" fill="none" stroke="#3fd23f" stroke-width="1.3"/><rect x="776.5" y="89.5" width="3" height="3" fill="#3fd23f"/><text x="786.0" y="96.0" fill="#3fd23f">+4</text><rect x="774.5" y="129.0" width="3" height="3" fill="#3fd23f"/><text x="784.0" y="135.5" fill="#3fd23f">+3</text><rect x="772.5" y="169.0" width="3" height="3" fill="#3fd23f"/><text x="782.0" y="175.5" fill="#3fd23f">+2</text><rect x="770.5" y="209.0" width="3" height="3" fill="#3fd23f"/><text x="780.0" y="215.5" fill="#3fd23f">+1</text><rect x="768.5" y="248.5" width="3" height="3" fill="#3fd23f"/><text x="778.0" y="255.0" fill="#3fd23f">0</text><rect x="766.5" y="288.5" width="3" height="3" fill="#3fd23f"/><text x="776.0" y="295.0" fill="#3fd23f">-1</text><rect x="764.5" y="328.5" width="3" height="3" fill="#3fd23f"/><text x="774.0" y="335.0" fill="#3fd23f">-2</text><rect x="761.5" y="368.5" width="3" height="3" fill="#3fd23f"/><text x="771.0" y="375.0" fill="#3fd23f">-3</text><rect x="759.5" y="408.0" width="3" height="3" fill="#3fd23f"/><text x="769.0" y="414.5" fill="#3fd23f">-4</text><text x="804.0" y="255.0" fill="#3fd23f">Y</text><polyline points="750.4,447.8 735.5,465.9 720.6,484.0 705.7,502.0 690.8,520.0 675.0,539.0 660.0,557.0 645.0,575.0" fill="none" stroke="#1ec8ff" stroke-width="1.3"/><rect x="748.9" y="446.3" width="3" height="3" fill="#1ec8ff"/><rect x="734.0" y="464.4" width="3" height="3" fill="#1ec8ff"/><rect x="719.1" y="482.5" width="3" height="3" fill="#1ec8ff"/><rect x="704.2" y="500.5" width="3" height="3" fill="#1ec8ff"/><rect x="689.3" y="518.5" width="3" height="3" fill="#1ec8ff"/><rect x="673.5" y="537.5" width="3" height="3" fill="#1ec8ff"/><rect x="658.5" y="555.5" width="3" height="3" fill="#1ec8ff"/><text x="745.5" y="473.9" fill="#1ec8ff">-4</text><text x="730.6" y="492.0" fill="#1ec8ff">-3</text><text x="715.7" y="510.0" fill="#1ec8ff">-2</text><text x="700.8" y="528.0" fill="#1ec8ff">-1</text><text x="685.0" y="547.0" fill="#1ec8ff">0</text><text x="670.0" y="565.0" fill="#1ec8ff">+1</text><text x="655.0" y="583.0" fill="#1ec8ff">Z</text><polyline points="246.0,520.3 289.0,530.0 330.0,539.5 372.0,550.0 413.0,560.0 455.0,570.0" fill="none" stroke="#ff5a14" stroke-width="1.3"/><rect x="244.5" y="518.8" width="3" height="3" fill="#ff5a14"/><rect x="287.5" y="528.5" width="3" height="3" fill="#ff5a14"/><rect x="328.5" y="538.0" width="3" height="3" fill="#ff5a14"/><rect x="370.5" y="548.5" width="3" height="3" fill="#ff5a14"/><rect x="411.5" y="558.5" width="3" height="3" fill="#ff5a14"/><rect x="453.5" y="568.5" width="3" height="3" fill="#ff5a14"/><text x="240.0" y="545.3" fill="#ff5a14">-4</text><text x="283.0" y="555.0" fill="#ff5a14">-3</text><text x="324.0" y="564.5" fill="#ff5a14">-2</text><text x="366.0" y="575.0" fill="#ff5a14">-1</text><text x="407.0" y="585.0" fill="#ff5a14">0</text><text x="449.0" y="595.0" fill="#ff5a14">+1</text></g><defs><linearGradient id="gz5" x1="0" y1="0" x2="0" y2="1"><stop offset="0" stop-color="#cf6698"/><stop offset="0.1" stop-color="#ed78af"/><stop offset="0.22" stop-color="#e875ac"/><stop offset="0.3" stop-color="#da6ca0"/><stop offset="0.88" stop-color="#d3689b"/><stop offset="1" stop-color="#b25883"/></linearGradient><linearGradient id="gy5" x1="0" y1="0" x2="0" y2="1"><stop offset="0" stop-color="#b75a86"/><stop offset="0.55" stop-color="#ca6494"/><stop offset="0.82" stop-color="#d76a9e"/><stop offset="0.93" stop-color="#f980ba"/><stop offset="1" stop-color="#c86393"/></linearGradient><linearGradient id="gx5" x1="0" y1="0" x2="1" y2="0"><stop offset="0" stop-color="#c86393"/><stop offset="0.25" stop-color="#ae5680"/><stop offset="0.7" stop-color="#9c4d73"/><stop offset="1" stop-color="#874263"/></linearGradient><linearGradient id="gz11" x1="0" y1="0" x2="0" y2="1"><stop offset="0" stop-color="#44985d"/><stop offset="0.1" stop-color="#52af6d"/><stop offset="0.22" stop-color="#4fac6a"/><stop offset="0.3" stop-color="#48a062"/><stop offset="0.88" stop-color="#459b5f"/><stop offset="1" stop-color="#3b8350"/></linearGradient><linearGradient id="gy11" x1="0" y1="0" x2="0" y2="1"><stop offset="0" stop-color="#3c8652"/><stop offset="0.55" stop-color="#42945b"/><stop offset="0.82" stop-color="#479e61"/><stop offset="0.93" stop-color="#59ba75"/><stop offset="1" stop-color="#42935a"/></linearGradient><linearGradient id="gx11" x1="0" y1="0" x2="1" y2="0"><stop offset="0" stop-color="#42935a"/><stop offset="0.25" stop-color="#39804e"/><stop offset="0.7" stop-color="#337346"/><stop offset="1" stop-color="#2c633c"/></linearGradient><linearGradient id="gz12" x1="0" y1="0" x2="0" y2="1"><stop offset="0" stop-color="#3a3762"/><stop offset="0.1" stop-color="#474374"/><stop offset="0.22" stop-color="#454071"/><stop offset="0.3" stop-color="#3e3a68"/><stop offset="0.88" stop-color="#3c3864"/><stop offset="1" stop-color="#322f55"/></linearGradient><linearGradient id="gy12" x1="0" y1="0" x2="0" y2="1"><stop offset="0" stop-color="#343057"/><stop offset="0.55" stop-color="#393560"/><stop offset="0.82" stop-color="#3d3966"/><stop offset="0.93" stop-color="#4e497c"/><stop offset="1" stop-color="#39355f"/></linearGradient><linearGradient id="gx12" x1="0" y1="0" x2="1" y2="0"><stop offset="0" stop-color="#39355f"/><stop offset="0.25" stop-color="#312e53"/><stop offset="0.7" stop-color="#2c294a"/><stop offset="1" stop-color="#262340"/></linearGradient><linearGradient id="gz1" x1="0" y1="0" x2="0" y2="1"><stop offset="0" stop-color="#dce0e9"/><stop offset="0.1" stop-color="#fbffff"/><stop offset="0.22" stop-color="#f7fbff"/><stop offset="0.3" stop-color="#e8ecf6"/><stop offset="0.88" stop-color="#e1e4ee"/><stop offset="1" stop-color="#bec1c9"/></linearGradient><linearGradient id="gy1" x1="0" y1="0" x2="0" y2="1"><stop offset="0" stop-color="#c2c6ce"/><stop offset="0.55" stop-color="#d7dbe4"/><stop offset="0.82" stop-color="#e5e9f3"/><stop offset="0.93" stop-color="#ffffff"/><stop offset="1" stop-color="#d5d9e2"/></linearGradient><linearGradient id="gx1" x1="0" y1="0" x2="1" y2="0"><stop offset="0" stop-color="#d5d9e2"/><stop offset="0.25" stop-color="#b9bcc4"/><stop offset="0.7" stop-color="#a7a9b1"/><stop offset="1" stop-color="#8f9298"/></linearGradient><linearGradient id="gz14" x1="0" y1="0" x2="0" y2="1"><stop offset="0" stop-color="#7094d1"/><stop offset="0.1" stop-color="#83abef"/><stop offset="0.22" stop-color="#7fa7eb"/><stop offset="0.3" stop-color="#769cdc"/><stop offset="0.88" stop-color="#7297d5"/><stop offset="1" stop-color="#607fb4"/></linearGradient><linearGradient id="gy14" x1="0" y1="0" x2="0" y2="1"><stop offset="0" stop-color="#6383b8"/><stop offset="0.55" stop-color="#6d91cc"/><stop offset="0.82" stop-color="#749ad9"/><stop offset="0.93" stop-color="#8bb5fc"/><stop offset="1" stop-color="#6c8fca"/></linearGradient><linearGradient id="gx14" x1="0" y1="0" x2="1" y2="0"><stop offset="0" stop-color="#6c8fca"/><stop offset="0.25" stop-color="#5e7cb0"/><stop offset="0.7" stop-color="#54709e"/><stop offset="1" stop-color="#496088"/></linearGradient><linearGradient id="gr" x1="0" y1="0" x2="1" y2="0"><stop offset="0.8" stop-color="#000" stop-opacity="0"/><stop offset="1" stop-color="#000" stop-opacity="0.28"/></linearGradient></defs>
<polygon points="427.0,47.1 461.3,49.4 442.4,54.2 407.5,51.8" fill="url(#gy5)" stroke="#623048" stroke-width="0.90" stroke-opacity="0.35"/>
<polygon points="374.0,375.7 408.1,381.8 407.3,344.2 373.1,338.6" fill="url(#gz5)" stroke="#623048" stroke-width="0.90" stroke-opacity="0.50"/>
<polygon points="374.0,375.7 408.1,381.8 407.3,344.2 373.1,338.6" fill="url(#gr)"/>
<polygon points="373.1,338.6 407.3,344.2 406.6,306.1 372.0,300.8" fill="url(#gz5)" stroke="#623048" stroke-width="0.90" stroke-opacity="0.50"/>
<polygon points="373.1,338.6 407.3,344.2 406.6,306.1 372.0,300.8" fill="url(#gr)"/>
<polygon points="461.3,49.4 496.4,51.7 478.1,56.6 442.4,54.2" fill="url(#gy5)" stroke="#623048" stroke-width="0.90" stroke-opacity="0.35"/>
<polygon points="374.0,375.7 408.1,381.8 387.7,394.4 353.2,388.1" fill="url(#gy5)" stroke="#623048" stroke-width="0.90" stroke-opacity="0.35"/>
<polygon points="408.1,381.8 442.9,388.0 442.4,350.0 407.3,344.2" fill="url(#gz5)" stroke="#623048" stroke-width="0.90" stroke-opacity="0.50"/>
<polygon points="408.1,381.8 442.9,388.0 442.4,350.0 407.3,344.2" fill="url(#gr)"/>
<polygon points="372.0,300.8 406.6,306.1 405.8,267.3 371.0,262.5" fill="url(#gz5)" stroke="#623048" stroke-width="0.90" stroke-opacity="0.50"/>
<polygon points="372.0,300.8 406.6,306.1 405.8,267.3 371.0,262.5" fill="url(#gr)"/>
<polygon points="407.3,344.2 442.4,350.0 441.9,311.5 406.6,306.1" fill="url(#gz5)" stroke="#623048" stroke-width="0.90" stroke-opacity="0.50"/>
<polygon points="407.3,344.2 442.4,350.0 441.9,311.5 406.6,306.1" fill="url(#gr)"/>
<polygon points="407.5,51.8 442.4,54.2 422.6,59.1 387.1,56.6" fill="url(#gy5)" stroke="#623048" stroke-width="0.90" stroke-opacity="0.35"/>
<polygon points="371.0,262.5 405.8,267.3 405.0,228.0 370.0,223.6" fill="url(#gz5)" stroke="#623048" stroke-width="0.90" stroke-opacity="0.50"/>
<polygon points="371.0,262.5 405.8,267.3 405.0,228.0 370.0,223.6" fill="url(#gr)"/>
<polygon points="496.4,51.7 532.3,54.1 514.7,59.1 478.1,56.6" fill="url(#gy5)" stroke="#623048" stroke-width="0.90" stroke-opacity="0.35"/>
<polygon points="442.9,388.0 478.5,394.3 478.3,355.9 442.4,350.0" fill="url(#gz5)" stroke="#623048" stroke-width="0.90" stroke-opacity="0.50"/>
<polygon points="442.9,388.0 478.5,394.3 478.3,355.9 442.4,350.0" fill="url(#gr)"/>
<polygon points="408.1,381.8 442.9,388.0 423.1,400.9 387.7,394.4" fill="url(#gy5)" stroke="#623048" stroke-width="0.90" stroke-opacity="0.35"/>
<polygon points="748.7,431.7 750.6,394.0 738.0,407.2 736.2,445.7" fill="url(#gx5)" stroke="#623048" stroke-width="0.90" stroke-opacity="0.50"/>
<polygon points="406.6,306.1 441.9,311.5 441.4,272.3 405.8,267.3" fill="url(#gz11)" stroke="#20482c" stroke-width="0.90" stroke-opacity="0.50"/>
<polygon points="406.6,306.1 441.9,311.5 441.4,272.3 405.8,267.3" fill="url(#gr)"/>
<polygon points="370.0,223.6 405.0,228.0 404.2,188.1 368.9,184.0" fill="url(#gz5)" stroke="#623048" stroke-width="0.90" stroke-opacity="0.50"/>
<polygon points="370.0,223.6 405.0,228.0 404.2,188.1 368.9,184.0" fill="url(#gr)"/>
<polygon points="442.4,350.0 478.3,355.9 478.1,317.0 441.9,311.5" fill="url(#gz5)" stroke="#623048" stroke-width="0.90" stroke-opacity="0.50"/>
<polygon points="442.4,350.0 478.3,355.9 478.1,317.0 441.9,311.5" fill="url(#gr)"/>
<polygon points="353.2,388.1 387.7,394.4 366.4,407.6 331.3,401.0" fill="url(#gy5)" stroke="#623048" stroke-width="0.90" stroke-opacity="0.35"/>
<polygon points="442.4,54.2 478.1,56.6 458.9,61.7 422.6,59.1" fill="url(#gy5)" stroke="#623048" stroke-width="0.90" stroke-opacity="0.35"/>
<polygon points="532.3,54.1 569.1,56.6 552.1,61.6 514.7,59.1" fill="url(#gy5)" stroke="#623048" stroke-width="0.90" stroke-opacity="0.35"/>
<polygon points="368.9,184.0 404.2,188.1 403.4,147.5 367.9,143.9" fill="url(#gz5)" stroke="#623048" stroke-width="0.90" stroke-opacity="0.50"/>
<polygon points="368.9,184.0 404.2,188.1 403.4,147.5 367.9,143.9" fill="url(#gr)"/>
<polygon points="478.5,394.3 515.0,400.8 515.0,362.0 478.3,355.9" fill="url(#gz5)" stroke="#623048" stroke-width="0.90" stroke-opacity="0.50"/>
<polygon points="478.5,394.3 515.0,400.8 515.0,362.0 478.3,355.9" fill="url(#gr)"/>
<polygon points="405.8,267.3 441.4,272.3 440.9,232.5 405.0,228.0" fill="url(#gz11)" stroke="#20482c" stroke-width="0.90" stroke-opacity="0.50"/>
<polygon points="405.8,267.3 441.4,272.3 440.9,232.5 405.0,228.0" fill="url(#gr)"/>
<polygon points="750.6,394.0 752.4,355.6 739.8,368.0 738.0,407.2" fill="url(#gx5)" stroke="#623048" stroke-width="0.90" stroke-opacity="0.50"/>
<polygon points="442.9,388.0 478.5,394.3 459.4,407.5 423.1,400.9" fill="url(#gy5)" stroke="#623048" stroke-width="0.90" stroke-opacity="0.35"/>
<polygon points="367.9,143.9 403.4,147.5 402.6,106.2 366.8,103.1" fill="url(#gz5)" stroke="#623048" stroke-width="0.90" stroke-opacity="0.50"/>
<polygon points="367.9,143.9 403.4,147.5 402.6,106.2 366.8,103.1" fill="url(#gr)"/>
<polygon points="441.9,311.5 478.1,317.0 477.8,277.4 441.4,272.3" fill="url(#gz11)" stroke="#20482c" stroke-width="0.90" stroke-opacity="0.50"/>
<polygon points="441.9,311.5 478.1,317.0 477.8,277.4 441.4,272.3" fill="url(#gr)"/>
<polygon points="405.0,228.0 440.9,232.5 440.4,192.2 404.2,188.1" fill="url(#gz11)" stroke="#20482c" stroke-width="0.90" stroke-opacity="0.50"/>
<polygon points="405.0,228.0 440.9,232.5 440.4,192.2 404.2,188.1" fill="url(#gr)"/>
<polygon points="478.3,355.9 515.0,362.0 515.1,322.6 478.1,317.0" fill="url(#gz5)" stroke="#623048" stroke-width="0.90" stroke-opacity="0.50"/>
<polygon points="478.3,355.9 515.0,362.0 515.1,322.6 478.1,317.0" fill="url(#gr)"/>
<polygon points="752.4,355.6 754.4,316.7 741.7,328.2 739.8,368.0" fill="url(#gx5)" stroke="#623048" stroke-width="0.90" stroke-opacity="0.50"/>
<polygon points="387.1,56.6 422.6,59.1 401.8,64.4 365.7,61.7" fill="url(#gy5)" stroke="#623048" stroke-width="0.90" stroke-opacity="0.35"/>
<polygon points="366.8,103.1 402.6,106.2 401.8,64.4 365.7,61.7" fill="url(#gz5)" stroke="#623048" stroke-width="0.90" stroke-opacity="0.50"/>
<polygon points="366.8,103.1 402.6,106.2 401.8,64.4 365.7,61.7" fill="url(#gr)"/>
<polygon points="569.1,56.6 606.7,59.0 590.5,64.3 552.1,61.6" fill="url(#gy5)" stroke="#623048" stroke-width="0.90" stroke-opacity="0.35"/>
<polygon points="387.7,394.4 423.1,400.9 402.4,414.4 366.4,407.6" fill="url(#gy5)" stroke="#623048" stroke-width="0.90" stroke-opacity="0.35"/>
<polygon points="515.0,400.8 552.3,407.4 552.7,368.2 515.0,362.0" fill="url(#gz5)" stroke="#623048" stroke-width="0.90" stroke-opacity="0.50"/>
<polygon points="515.0,400.8 552.3,407.4 552.7,368.2 515.0,362.0" fill="url(#gr)"/>
<polygon points="478.1,56.6 514.7,59.1 496.1,64.3 458.9,61.7" fill="url(#gy5)" stroke="#623048" stroke-width="0.90" stroke-opacity="0.35"/>
<polygon points="441.4,272.3 477.8,277.4 477.6,237.2 440.9,232.5" fill="url(#gz11)" stroke="#20482c" stroke-width="0.90" stroke-opacity="0.50"/>
<polygon points="441.4,272.3 477.8,277.4 477.6,237.2 440.9,232.5" fill="url(#gr)"/>
<polygon points="404.2,188.1 440.4,192.2 439.9,151.1 403.4,147.5" fill="url(#gz11)" stroke="#20482c" stroke-width="0.90" stroke-opacity="0.50"/>
<polygon points="404.2,188.1 440.4,192.2 439.9,151.1 403.4,147.5" fill="url(#gr)"/>
<polygon points="478.5,394.3 515.0,400.8 496.5,414.3 459.4,407.5" fill="url(#gy5)" stroke="#623048" stroke-width="0.90" stroke-opacity="0.35"/>
<polygon points="736.2,445.7 738.0,407.2 724.8,421.0 723.1,460.4" fill="url(#gx5)" stroke="#623048" stroke-width="0.90" stroke-opacity="0.50"/>
<polygon points="478.1,317.0 515.1,322.6 515.2,282.6 477.8,277.4" fill="url(#gz11)" stroke="#20482c" stroke-width="0.90" stroke-opacity="0.50"/>
<polygon points="478.1,317.0 515.1,322.6 515.2,282.6 477.8,277.4" fill="url(#gr)"/>
<polygon points="754.4,316.7 756.3,277.1 743.6,287.8 741.7,328.2" fill="url(#gx5)" stroke="#623048" stroke-width="0.90" stroke-opacity="0.50"/>
<polygon points="403.4,147.5 439.9,151.1 439.3,109.4 402.6,106.2" fill="url(#gz11)" stroke="#20482c" stroke-width="0.90" stroke-opacity="0.50"/>
<polygon points="403.4,147.5 439.9,151.1 439.3,109.4 402.6,106.2" fill="url(#gr)"/>
<polygon points="331.3,401.0 366.4,407.6 344.1,421.5 308.3,414.5" fill="url(#gy5)" stroke="#623048" stroke-width="0.90" stroke-opacity="0.35"/>
<polygon points="440.9,232.5 477.6,237.2 477.4,196.4 440.4,192.2" fill="url(#gz11)" stroke="#20482c" stroke-width="0.90" stroke-opacity="0.50"/>
<polygon points="440.9,232.5 477.6,237.2 477.4,196.4 440.4,192.2" fill="url(#gr)"/>
<polygon points="515.0,362.0 552.7,368.2 553.0,328.4 515.1,322.6" fill="url(#gz5)" stroke="#623048" stroke-width="0.90" stroke-opacity="0.50"/>
<polygon points="515.0,362.0 552.7,368.2 553.0,328.4 515.1,322.6" fill="url(#gr)"/>
<polygon points="606.7,59.0 645.3,61.6 629.7,67.0 590.5,64.3" fill="url(#gy5)" stroke="#623048" stroke-width="0.90" stroke-opacity="0.35"/>
<polygon points="552.3,407.4 590.5,414.2 591.2,374.6 552.7,368.2" fill="url(#gz5)" stroke="#623048" stroke-width="0.90" stroke-opacity="0.50"/>
<polygon points="552.3,407.4 590.5,414.2 591.2,374.6 552.7,368.2" fill="url(#gr)"/>
<polygon points="422.6,59.1 458.9,61.7 438.8,67.0 401.8,64.4" fill="url(#gy5)" stroke="#623048" stroke-width="0.90" stroke-opacity="0.35"/>
<polygon points="402.6,106.2 439.3,109.4 438.8,67.0 401.8,64.4" fill="url(#gz5)" stroke="#623048" stroke-width="0.90" stroke-opacity="0.50"/>
<polygon points="402.6,106.2 439.3,109.4 438.8,67.0 401.8,64.4" fill="url(#gr)"/>
<polygon points="423.1,400.9 459.4,407.5 439.3,421.4 402.4,414.4" fill="url(#gy5)" stroke="#623048" stroke-width="0.90" stroke-opacity="0.35"/>
<polygon points="514.7,59.1 552.1,61.6 534.3,67.0 496.1,64.3" fill="url(#gy5)" stroke="#623048" stroke-width="0.90" stroke-opacity="0.35"/>
<polygon points="515.0,400.8 552.3,407.4 534.5,421.3 496.5,414.3" fill="url(#gy5)" stroke="#623048" stroke-width="0.90" stroke-opacity="0.35"/>
<polygon points="738.0,407.2 739.8,368.0 726.6,381.0 724.8,421.0" fill="url(#gx5)" stroke="#623048" stroke-width="0.90" stroke-opacity="0.50"/>
<polygon points="477.8,277.4 515.2,282.6 515.2,242.0 477.6,237.2" fill="url(#gz11)" stroke="#20482c" stroke-width="0.90" stroke-opacity="0.50"/>
<polygon points="477.8,277.4 515.2,282.6 515.2,242.0 477.6,237.2" fill="url(#gr)"/>
<polygon points="756.3,277.1 758.3,237.0 745.5,246.7 743.6,287.8" fill="url(#gx5)" stroke="#623048" stroke-width="0.90" stroke-opacity="0.50"/>
<polygon points="440.4,192.2 477.4,196.4 477.2,154.9 439.9,151.1" fill="url(#gz11)" stroke="#20482c" stroke-width="0.90" stroke-opacity="0.50"/>
<polygon points="440.4,192.2 477.4,196.4 477.2,154.9 439.9,151.1" fill="url(#gr)"/>
<polygon points="515.1,322.6 553.0,328.4 553.4,288.0 515.2,282.6" fill="url(#gz11)" stroke="#20482c" stroke-width="0.90" stroke-opacity="0.50"/>
<polygon points="515.1,322.6 553.0,328.4 553.4,288.0 515.2,282.6" fill="url(#gr)"/>
<polygon points="645.3,61.6 684.7,64.2 670.0,69.7 629.7,67.0" fill="url(#gy5)" stroke="#623048" stroke-width="0.90" stroke-opacity="0.35"/>
<polygon points="552.7,368.2 591.2,374.6 591.9,334.3 553.0,328.4" fill="url(#gz5)" stroke="#623048" stroke-width="0.90" stroke-opacity="0.50"/>
<polygon points="552.7,368.2 591.2,374.6 591.9,334.3 553.0,328.4" fill="url(#gr)"/>
<polygon points="439.9,151.1 477.2,154.9 476.9,112.7 439.3,109.4" fill="url(#gz11)" stroke="#20482c" stroke-width="0.90" stroke-opacity="0.50"/>
<polygon points="439.9,151.1 477.2,154.9 476.9,112.7 439.3,109.4" fill="url(#gr)"/>
<polygon points="590.5,414.2 629.7,421.1 630.7,381.1 591.2,374.6" fill="url(#gz5)" stroke="#623048" stroke-width="0.90" stroke-opacity="0.50"/>
<polygon points="590.5,414.2 629.7,421.1 630.7,381.1 591.2,374.6" fill="url(#gr)"/>
<polygon points="477.6,237.2 515.2,242.0 515.3,200.7 477.4,196.4" fill="url(#gz11)" stroke="#20482c" stroke-width="0.90" stroke-opacity="0.50"/>
<polygon points="477.6,237.2 515.2,242.0 515.3,200.7 477.4,196.4" fill="url(#gr)"/>
<polygon points="758.3,237.0 760.3,196.1 747.5,204.9 745.5,246.7" fill="url(#gx5)" stroke="#623048" stroke-width="0.90" stroke-opacity="0.50"/>
<polygon points="366.4,407.6 402.4,414.4 380.7,428.6 344.1,421.5" fill="url(#gy5)" stroke="#623048" stroke-width="0.90" stroke-opacity="0.35"/>
<polygon points="739.8,368.0 741.7,328.2 728.4,340.3 726.6,381.0" fill="url(#gx5)" stroke="#623048" stroke-width="0.90" stroke-opacity="0.50"/>
<polygon points="552.3,407.4 590.5,414.2 573.5,428.4 534.5,421.3" fill="url(#gy5)" stroke="#623048" stroke-width="0.90" stroke-opacity="0.35"/>
<polygon points="552.1,61.6 590.5,64.3 573.4,69.8 534.3,67.0" fill="url(#gy5)" stroke="#623048" stroke-width="0.90" stroke-opacity="0.35"/>
<polygon points="459.4,407.5 496.5,414.3 477.1,428.5 439.3,421.4" fill="url(#gy5)" stroke="#623048" stroke-width="0.90" stroke-opacity="0.35"/>
<polygon points="458.9,61.7 496.1,64.3 476.7,69.8 438.8,67.0" fill="url(#gy5)" stroke="#623048" stroke-width="0.90" stroke-opacity="0.35"/>
<polygon points="439.3,109.4 476.9,112.7 476.7,69.8 438.8,67.0" fill="url(#gz5)" stroke="#623048" stroke-width="0.90" stroke-opacity="0.50"/>
<polygon points="439.3,109.4 476.9,112.7 476.7,69.8 438.8,67.0" fill="url(#gr)"/>
<polygon points="515.2,282.6 553.4,288.0 553.8,246.9 515.2,242.0" fill="url(#gz11)" stroke="#20482c" stroke-width="0.90" stroke-opacity="0.50"/>
<polygon points="515.2,282.6 553.4,288.0 553.8,246.9 515.2,242.0" fill="url(#gr)"/>
<polygon points="477.4,196.4 515.3,200.7 515.4,158.7 477.2,154.9" fill="url(#gz11)" stroke="#20482c" stroke-width="0.90" stroke-opacity="0.50"/>
<polygon points="477.4,196.4 515.3,200.7 515.4,158.7 477.2,154.9" fill="url(#gr)"/>
<polygon points="760.3,196.1 762.4,154.7 749.5,162.5 747.5,204.9" fill="url(#gx5)" stroke="#623048" stroke-width="0.90" stroke-opacity="0.50"/>
<polygon points="723.1,460.4 724.8,421.0 711.0,435.6 709.3,475.8" fill="url(#gx5)" stroke="#623048" stroke-width="0.90" stroke-opacity="0.50"/>
<polygon points="553.0,328.4 591.9,334.3 592.6,293.4 553.4,288.0" fill="url(#gz11)" stroke="#20482c" stroke-width="0.90" stroke-opacity="0.50"/>
<polygon points="553.0,328.4 591.9,334.3 592.6,293.4 553.4,288.0" fill="url(#gr)"/>
<polygon points="308.3,414.5 344.1,421.5 320.6,436.1 284.2,428.8" fill="url(#gy5)" stroke="#623048" stroke-width="0.90" stroke-opacity="0.35"/>
<polygon points="684.7,64.2 725.2,66.9 711.3,72.5 670.0,69.7" fill="url(#gy5)" stroke="#623048" stroke-width="0.90" stroke-opacity="0.35"/>
<polygon points="629.7,421.1 669.8,428.3 671.2,387.8 630.7,381.1" fill="url(#gz5)" stroke="#623048" stroke-width="0.90" stroke-opacity="0.50"/>
<polygon points="629.7,421.1 669.8,428.3 671.2,387.8 630.7,381.1" fill="url(#gr)"/>
<polygon points="591.2,374.6 630.7,381.1 631.7,340.4 591.9,334.3" fill="url(#gz5)" stroke="#623048" stroke-width="0.90" stroke-opacity="0.50"/>
<polygon points="591.2,374.6 630.7,381.1 631.7,340.4 591.9,334.3" fill="url(#gr)"/>
<polygon points="741.7,328.2 743.6,287.8 730.2,299.0 728.4,340.3" fill="url(#gx5)" stroke="#623048" stroke-width="0.90" stroke-opacity="0.50"/>
<polygon points="515.2,242.0 553.8,246.9 554.2,205.1 515.3,200.7" fill="url(#gz11)" stroke="#20482c" stroke-width="0.90" stroke-opacity="0.50"/>
<polygon points="515.2,242.0 553.8,246.9 554.2,205.1 515.3,200.7" fill="url(#gr)"/>
<polygon points="477.2,154.9 515.4,158.7 515.5,116.0 476.9,112.7" fill="url(#gz11)" stroke="#20482c" stroke-width="0.90" stroke-opacity="0.50"/>
<polygon points="477.2,154.9 515.4,158.7 515.5,116.0 476.9,112.7" fill="url(#gr)"/>
<polygon points="762.4,154.7 764.5,112.5 751.5,119.3 749.5,162.5" fill="url(#gx5)" stroke="#623048" stroke-width="0.90" stroke-opacity="0.50"/>
<polygon points="590.5,414.2 629.7,421.1 613.4,435.7 573.5,428.4" fill="url(#gy5)" stroke="#623048" stroke-width="0.90" stroke-opacity="0.35"/>
<polygon points="402.4,414.4 439.3,421.4 418.2,435.9 380.7,428.6" fill="url(#gy5)" stroke="#623048" stroke-width="0.90" stroke-opacity="0.35"/>
<polygon points="590.5,64.3 629.7,67.0 613.4,72.6 573.4,69.8" fill="url(#gy5)" stroke="#623048" stroke-width="0.90" stroke-opacity="0.35"/>
<polygon points="553.4,288.0 592.6,293.4 593.3,251.9 553.8,246.9" fill="url(#gz11)" stroke="#20482c" stroke-width="0.90" stroke-opacity="0.50"/>
<polygon points="553.4,288.0 592.6,293.4 593.3,251.9 553.8,246.9" fill="url(#gr)"/>
<polygon points="496.5,414.3 534.5,421.3 515.9,435.8 477.1,428.5" fill="url(#gy5)" stroke="#623048" stroke-width="0.90" stroke-opacity="0.35"/>
<polygon points="496.1,64.3 534.3,67.0 515.6,72.6 476.7,69.8" fill="url(#gy5)" stroke="#623048" stroke-width="0.90" stroke-opacity="0.35"/>
<polygon points="476.9,112.7 515.5,116.0 515.6,72.6 476.7,69.8" fill="url(#gz5)" stroke="#623048" stroke-width="0.90" stroke-opacity="0.50"/>
<polygon points="476.9,112.7 515.5,116.0 515.6,72.6 476.7,69.8" fill="url(#gr)"/>
<polygon points="764.5,112.5 766.6,69.7 753.6,75.4 751.5,119.3" fill="url(#gx5)" stroke="#623048" stroke-width="0.90" stroke-opacity="0.50"/>
<polygon points="725.2,66.9 766.6,69.7 753.6,75.4 711.3,72.5" fill="url(#gy5)" stroke="#623048" stroke-width="0.90" stroke-opacity="0.35"/>
<polygon points="724.8,421.0 726.6,381.0 712.7,394.6 711.0,435.6" fill="url(#gx5)" stroke="#623048" stroke-width="0.90" stroke-opacity="0.50"/>
<polygon points="669.8,428.3 711.0,435.6 712.7,394.6 671.2,387.8" fill="url(#gz5)" stroke="#623048" stroke-width="0.90" stroke-opacity="0.50"/>
<polygon points="669.8,428.3 711.0,435.6 712.7,394.6 671.2,387.8" fill="url(#gr)"/>
<polygon points="591.9,334.3 631.7,340.4 632.8,299.1 592.6,293.4" fill="url(#gz11)" stroke="#20482c" stroke-width="0.90" stroke-opacity="0.50"/>
<polygon points="591.9,334.3 631.7,340.4 632.8,299.1 592.6,293.4" fill="url(#gr)"/>
<polygon points="515.3,200.7 554.2,205.1 554.6,162.6 515.4,158.7" fill="url(#gz11)" stroke="#20482c" stroke-width="0.90" stroke-opacity="0.50"/>
<polygon points="515.3,200.7 554.2,205.1 554.6,162.6 515.4,158.7" fill="url(#gr)"/>
<polygon points="630.7,381.1 671.2,387.8 672.6,346.6 631.7,340.4" fill="url(#gz5)" stroke="#623048" stroke-width="0.90" stroke-opacity="0.50"/>
<polygon points="630.7,381.1 671.2,387.8 672.6,346.6 631.7,340.4" fill="url(#gr)"/>
<polygon points="743.6,287.8 745.5,246.7 732.1,256.9 730.2,299.0" fill="url(#gx5)" stroke="#623048" stroke-width="0.90" stroke-opacity="0.50"/>
<polygon points="344.1,421.5 380.7,428.6 357.8,443.6 320.6,436.1" fill="url(#gy5)" stroke="#623048" stroke-width="0.90" stroke-opacity="0.35"/>
<polygon points="553.8,246.9 593.3,251.9 594.0,209.6 554.2,205.1" fill="url(#gz11)" stroke="#20482c" stroke-width="0.90" stroke-opacity="0.50"/>
<polygon points="553.8,246.9 593.3,251.9 594.0,209.6 554.2,205.1" fill="url(#gr)"/>
<polygon points="629.7,421.1 669.8,428.3 654.4,443.2 613.4,435.7" fill="url(#gy5)" stroke="#623048" stroke-width="0.90" stroke-opacity="0.35"/>
<polygon points="515.4,158.7 554.6,162.6 555.0,119.4 515.5,116.0" fill="url(#gz11)" stroke="#20482c" stroke-width="0.90" stroke-opacity="0.50"/>
<polygon points="515.4,158.7 554.6,162.6 555.0,119.4 515.5,116.0" fill="url(#gr)"/>
<polygon points="629.7,67.0 670.0,69.7 654.5,75.5 613.4,72.6" fill="url(#gy5)" stroke="#623048" stroke-width="0.90" stroke-opacity="0.35"/>
<polygon points="592.6,293.4 632.8,299.1 633.8,257.0 593.3,251.9" fill="url(#gz11)" stroke="#20482c" stroke-width="0.90" stroke-opacity="0.50"/>
<polygon points="592.6,293.4 632.8,299.1 633.8,257.0 593.3,251.9" fill="url(#gr)"/>
<polygon points="745.5,246.7 747.5,204.9 734.0,214.2 732.1,256.9" fill="url(#gx5)" stroke="#623048" stroke-width="0.90" stroke-opacity="0.50"/>
<polygon points="439.3,421.4 477.1,428.5 456.7,443.4 418.2,435.9" fill="url(#gy5)" stroke="#623048" stroke-width="0.90" stroke-opacity="0.35"/>
<polygon points="534.5,421.3 573.5,428.4 555.6,443.3 515.9,435.8" fill="url(#gy5)" stroke="#623048" stroke-width="0.90" stroke-opacity="0.35"/>
<polygon points="726.6,381.0 728.4,340.3 714.4,353.0 712.7,394.6" fill="url(#gx5)" stroke="#623048" stroke-width="0.90" stroke-opacity="0.50"/>
<polygon points="671.2,387.8 712.7,394.6 714.4,353.0 672.6,346.6" fill="url(#gz5)" stroke="#623048" stroke-width="0.90" stroke-opacity="0.50"/>
<polygon points="671.2,387.8 712.7,394.6 714.4,353.0 672.6,346.6" fill="url(#gr)"/>
<polygon points="631.7,340.4 672.6,346.6 673.9,304.8 632.8,299.1" fill="url(#gz11)" stroke="#20482c" stroke-width="0.90" stroke-opacity="0.50"/>
<polygon points="631.7,340.4 672.6,346.6 673.9,304.8 632.8,299.1" fill="url(#gr)"/>
<polygon points="534.3,67.0 573.4,69.8 555.4,75.5 515.6,72.6" fill="url(#gy5)" stroke="#623048" stroke-width="0.90" stroke-opacity="0.35"/>
<polygon points="515.5,116.0 555.0,119.4 555.4,75.5 515.6,72.6" fill="url(#gz5)" stroke="#623048" stroke-width="0.90" stroke-opacity="0.50"/>
<polygon points="515.5,116.0 555.0,119.4 555.4,75.5 515.6,72.6" fill="url(#gr)"/>
<polygon points="554.2,205.1 594.0,209.6 594.8,166.6 554.6,162.6" fill="url(#gz11)" stroke="#20482c" stroke-width="0.90" stroke-opacity="0.50"/>
<polygon points="554.2,205.1 594.0,209.6 594.8,166.6 554.6,162.6" fill="url(#gr)"/>
<polygon points="284.2,428.8 320.6,436.1 295.9,451.4 258.9,443.7" fill="url(#gy5)" stroke="#623048" stroke-width="0.90" stroke-opacity="0.35"/>
<polygon points="709.3,475.8 711.0,435.6 696.4,450.9 694.8,492.0" fill="url(#gx5)" stroke="#623048" stroke-width="0.90" stroke-opacity="0.50"/>
<polygon points="669.8,428.3 711.0,435.6 696.4,450.9 654.4,443.2" fill="url(#gy5)" stroke="#623048" stroke-width="0.90" stroke-opacity="0.35"/>
<polygon points="747.5,204.9 749.5,162.5 736.0,170.7 734.0,214.2" fill="url(#gx5)" stroke="#623048" stroke-width="0.90" stroke-opacity="0.50"/>
<polygon points="593.3,251.9 633.8,257.0 634.9,214.2 594.0,209.6" fill="url(#gz11)" stroke="#20482c" stroke-width="0.90" stroke-opacity="0.50"/>
<polygon points="593.3,251.9 633.8,257.0 634.9,214.2 594.0,209.6" fill="url(#gr)"/>
<polygon points="670.0,69.7 711.3,72.5 696.7,78.4 654.5,75.5" fill="url(#gy5)" stroke="#623048" stroke-width="0.90" stroke-opacity="0.35"/>
<polygon points="554.6,162.6 594.8,166.6 595.5,122.9 555.0,119.4" fill="url(#gz11)" stroke="#20482c" stroke-width="0.90" stroke-opacity="0.50"/>
<polygon points="554.6,162.6 594.8,166.6 595.5,122.9 555.0,119.4" fill="url(#gr)"/>
<polygon points="632.8,299.1 673.9,304.8 675.4,262.3 633.8,257.0" fill="url(#gz11)" stroke="#20482c" stroke-width="0.90" stroke-opacity="0.50"/>
<polygon points="632.8,299.1 673.9,304.8 675.4,262.3 633.8,257.0" fill="url(#gr)"/>
<polygon points="380.7,428.6 418.2,435.9 396.1,451.3 357.8,443.6" fill="url(#gy5)" stroke="#623048" stroke-width="0.90" stroke-opacity="0.35"/>
<polygon points="728.4,340.3 730.2,299.0 716.2,310.7 714.4,353.0" fill="url(#gx5)" stroke="#623048" stroke-width="0.90" stroke-opacity="0.50"/>
<polygon points="672.6,346.6 714.4,353.0 716.2,310.7 673.9,304.8" fill="url(#gz5)" stroke="#623048" stroke-width="0.90" stroke-opacity="0.50"/>
<polygon points="672.6,346.6 714.4,353.0 716.2,310.7 673.9,304.8" fill="url(#gr)"/>
<polygon points="573.5,428.4 613.4,435.7 596.3,451.0 555.6,443.3" fill="url(#gy5)" stroke="#623048" stroke-width="0.90" stroke-opacity="0.35"/>
<polygon points="749.5,162.5 751.5,119.3 737.9,126.5 736.0,170.7" fill="url(#gx5)" stroke="#623048" stroke-width="0.90" stroke-opacity="0.50"/>
<polygon points="477.1,428.5 515.9,435.8 496.2,451.1 456.7,443.4" fill="url(#gy5)" stroke="#623048" stroke-width="0.90" stroke-opacity="0.35"/>
<polygon points="594.0,209.6 634.9,214.2 636.0,170.8 594.8,166.6" fill="url(#gz11)" stroke="#20482c" stroke-width="0.90" stroke-opacity="0.50"/>
<polygon points="594.0,209.6 634.9,214.2 636.0,170.8 594.8,166.6" fill="url(#gr)"/>
<polygon points="573.4,69.8 613.4,72.6 596.3,78.5 555.4,75.5" fill="url(#gy5)" stroke="#623048" stroke-width="0.90" stroke-opacity="0.35"/>
<polygon points="555.0,119.4 595.5,122.9 596.3,78.5 555.4,75.5" fill="url(#gz5)" stroke="#623048" stroke-width="0.90" stroke-opacity="0.50"/>
<polygon points="555.0,119.4 595.5,122.9 596.3,78.5 555.4,75.5" fill="url(#gr)"/>
<polygon points="633.8,257.0 675.4,262.3 676.8,219.0 634.9,214.2" fill="url(#gz11)" stroke="#20482c" stroke-width="0.90" stroke-opacity="0.50"/>
<polygon points="633.8,257.0 675.4,262.3 676.8,219.0 634.9,214.2" fill="url(#gr)"/>
<polygon points="751.5,119.3 753.6,75.4 739.9,81.5 737.9,126.5" fill="url(#gx5)" stroke="#623048" stroke-width="0.90" stroke-opacity="0.50"/>
<polygon points="711.3,72.5 753.6,75.4 739.9,81.5 696.7,78.4" fill="url(#gy5)" stroke="#623048" stroke-width="0.90" stroke-opacity="0.35"/>
<polygon points="320.6,436.1 357.8,443.6 333.8,459.3 295.9,451.4" fill="url(#gy5)" stroke="#623048" stroke-width="0.90" stroke-opacity="0.35"/>
<polygon points="730.2,299.0 732.1,256.9 718.0,267.7 716.2,310.7" fill="url(#gx5)" stroke="#623048" stroke-width="0.90" stroke-opacity="0.50"/>
<polygon points="673.9,304.8 716.2,310.7 718.0,267.7 675.4,262.3" fill="url(#gz5)" stroke="#623048" stroke-width="0.90" stroke-opacity="0.50"/>
<polygon points="673.9,304.8 716.2,310.7 718.0,267.7 675.4,262.3" fill="url(#gr)"/>
<polygon points="594.8,166.6 636.0,170.8 637.1,126.5 595.5,122.9" fill="url(#gz11)" stroke="#20482c" stroke-width="0.90" stroke-opacity="0.50"/>
<polygon points="594.8,166.6 636.0,170.8 637.1,126.5 595.5,122.9" fill="url(#gr)"/>
<polygon points="613.4,435.7 654.4,443.2 638.2,458.9 596.3,451.0" fill="url(#gy5)" stroke="#623048" stroke-width="0.90" stroke-opacity="0.35"/>
<polygon points="418.2,435.9 456.7,443.4 435.3,459.2 396.1,451.3" fill="url(#gy5)" stroke="#623048" stroke-width="0.90" stroke-opacity="0.35"/>
<polygon points="634.9,214.2 676.8,219.0 678.3,175.0 636.0,170.8" fill="url(#gz11)" stroke="#20482c" stroke-width="0.90" stroke-opacity="0.50"/>
<polygon points="634.9,214.2 676.8,219.0 678.3,175.0 636.0,170.8" fill="url(#gr)"/>
<polygon points="515.9,435.8 555.6,443.3 536.7,459.0 496.2,451.1" fill="url(#gy5)" stroke="#623048" stroke-width="0.90" stroke-opacity="0.35"/>
<polygon points="258.9,443.7 295.9,451.4 269.8,467.6 232.3,459.4" fill="url(#gy5)" stroke="#623048" stroke-width="0.90" stroke-opacity="0.35"/>
<polygon points="234.6,501.1 271.9,509.7 269.8,467.6 232.3,459.4" fill="url(#gz5)" stroke="#623048" stroke-width="0.90" stroke-opacity="0.50"/>
<polygon points="234.6,501.1 271.9,509.7 269.8,467.6 232.3,459.4" fill="url(#gr)"/>
<polygon points="613.4,72.6 654.5,75.5 638.2,81.5 596.3,78.5" fill="url(#gy5)" stroke="#623048" stroke-width="0.90" stroke-opacity="0.35"/>
<polygon points="595.5,122.9 637.1,126.5 638.2,81.5 596.3,78.5" fill="url(#gz5)" stroke="#623048" stroke-width="0.90" stroke-opacity="0.50"/>
<polygon points="595.5,122.9 637.1,126.5 638.2,81.5 596.3,78.5" fill="url(#gr)"/>
<polygon points="732.1,256.9 734.0,214.2 719.8,223.9 718.0,267.7" fill="url(#gx5)" stroke="#623048" stroke-width="0.90" stroke-opacity="0.50"/>
<polygon points="675.4,262.3 718.0,267.7 719.8,223.9 676.8,219.0" fill="url(#gz5)" stroke="#623048" stroke-width="0.90" stroke-opacity="0.50"/>
<polygon points="675.4,262.3 718.0,267.7 719.8,223.9 676.8,219.0" fill="url(#gr)"/>
<polygon points="636.0,170.8 678.3,175.0 679.8,130.2 637.1,126.5" fill="url(#gz11)" stroke="#20482c" stroke-width="0.90" stroke-opacity="0.50"/>
<polygon points="636.0,170.8 678.3,175.0 679.8,130.2 637.1,126.5" fill="url(#gr)"/>
<polygon points="694.8,492.0 696.4,450.9 681.1,467.0 679.6,509.1" fill="url(#gx5)" stroke="#623048" stroke-width="0.90" stroke-opacity="0.50"/>
<polygon points="654.4,443.2 696.4,450.9 681.1,467.0 638.2,458.9" fill="url(#gy5)" stroke="#623048" stroke-width="0.90" stroke-opacity="0.35"/>
<polygon points="357.8,443.6 396.1,451.3 372.7,467.4 333.8,459.3" fill="url(#gy5)" stroke="#623048" stroke-width="0.90" stroke-opacity="0.35"/>
<polygon points="734.0,214.2 736.0,170.7 721.7,179.3 719.8,223.9" fill="url(#gx5)" stroke="#623048" stroke-width="0.90" stroke-opacity="0.50"/>
<polygon points="676.8,219.0 719.8,223.9 721.7,179.3 678.3,175.0" fill="url(#gz5)" stroke="#623048" stroke-width="0.90" stroke-opacity="0.50"/>
<polygon points="676.8,219.0 719.8,223.9 721.7,179.3 678.3,175.0" fill="url(#gr)"/>
<polygon points="654.5,75.5 696.7,78.4 681.3,84.7 638.2,81.5" fill="url(#gy5)" stroke="#623048" stroke-width="0.90" stroke-opacity="0.35"/>
<polygon points="637.1,126.5 679.8,130.2 681.3,84.7 638.2,81.5" fill="url(#gz5)" stroke="#623048" stroke-width="0.90" stroke-opacity="0.50"/>
<polygon points="637.1,126.5 679.8,130.2 681.3,84.7 638.2,81.5" fill="url(#gr)"/>
<polygon points="555.6,443.3 596.3,451.0 578.3,467.1 536.7,459.0" fill="url(#gy5)" stroke="#623048" stroke-width="0.90" stroke-opacity="0.35"/>
<polygon points="456.7,443.4 496.2,451.1 475.6,467.3 435.3,459.2" fill="url(#gy5)" stroke="#623048" stroke-width="0.90" stroke-opacity="0.35"/>
<polygon points="736.0,170.7 737.9,126.5 723.6,134.0 721.7,179.3" fill="url(#gx5)" stroke="#623048" stroke-width="0.90" stroke-opacity="0.50"/>
<polygon points="678.3,175.0 721.7,179.3 723.6,134.0 679.8,130.2" fill="url(#gz5)" stroke="#623048" stroke-width="0.90" stroke-opacity="0.50"/>
<polygon points="678.3,175.0 721.7,179.3 723.6,134.0 679.8,130.2" fill="url(#gr)"/>
<polygon points="295.9,451.4 333.8,459.3 308.4,475.9 269.8,467.6" fill="url(#gy5)" stroke="#623048" stroke-width="0.90" stroke-opacity="0.35"/>
<polygon points="271.9,509.7 310.2,518.5 308.4,475.9 269.8,467.6" fill="url(#gz5)" stroke="#623048" stroke-width="0.90" stroke-opacity="0.50"/>
<polygon points="271.9,509.7 310.2,518.5 308.4,475.9 269.8,467.6" fill="url(#gr)"/>
<polygon points="737.9,126.5 739.9,81.5 725.5,87.9 723.6,134.0" fill="url(#gx5)" stroke="#623048" stroke-width="0.90" stroke-opacity="0.50"/>
<polygon points="696.7,78.4 739.9,81.5 725.5,87.9 681.3,84.7" fill="url(#gy5)" stroke="#623048" stroke-width="0.90" stroke-opacity="0.35"/>
<polygon points="679.8,130.2 723.6,134.0 725.5,87.9 681.3,84.7" fill="url(#gz5)" stroke="#623048" stroke-width="0.90" stroke-opacity="0.50"/>
<polygon points="679.8,130.2 723.6,134.0 725.5,87.9 681.3,84.7" fill="url(#gr)"/>
<polygon points="596.3,451.0 638.2,458.9 621.0,475.4 578.3,467.1" fill="url(#gy5)" stroke="#623048" stroke-width="0.90" stroke-opacity="0.35"/>
<polygon points="396.1,451.3 435.3,459.2 412.7,475.7 372.7,467.4" fill="url(#gy5)" stroke="#623048" stroke-width="0.90" stroke-opacity="0.35"/>
<polygon points="496.2,451.1 536.7,459.0 516.9,475.6 475.6,467.3" fill="url(#gy5)" stroke="#623048" stroke-width="0.90" stroke-opacity="0.35"/>
<polygon points="333.8,459.3 372.7,467.4 348.1,484.4 308.4,475.9" fill="url(#gy5)" stroke="#623048" stroke-width="0.90" stroke-opacity="0.35"/>
<polygon points="310.2,518.5 349.5,527.6 348.1,484.4 308.4,475.9" fill="url(#gz5)" stroke="#623048" stroke-width="0.90" stroke-opacity="0.50"/>
<polygon points="310.2,518.5 349.5,527.6 348.1,484.4 308.4,475.9" fill="url(#gr)"/>
<polygon points="679.6,509.1 681.1,467.0 664.9,484.0 663.5,527.1" fill="url(#gx5)" stroke="#623048" stroke-width="0.90" stroke-opacity="0.50"/>
<polygon points="638.2,458.9 681.1,467.0 664.9,484.0 621.0,475.4" fill="url(#gy5)" stroke="#623048" stroke-width="0.90" stroke-opacity="0.35"/>
<polygon points="435.3,459.2 475.6,467.3 453.7,484.3 412.7,475.7" fill="url(#gy5)" stroke="#623048" stroke-width="0.90" stroke-opacity="0.35"/>
<polygon points="536.7,459.0 578.3,467.1 559.3,484.1 516.9,475.6" fill="url(#gy5)" stroke="#623048" stroke-width="0.90" stroke-opacity="0.35"/>
<polygon points="372.7,467.4 412.7,475.7 388.8,493.2 348.1,484.4" fill="url(#gy5)" stroke="#623048" stroke-width="0.90" stroke-opacity="0.35"/>
<polygon points="349.5,527.6 389.9,536.9 388.8,493.2 348.1,484.4" fill="url(#gz5)" stroke="#623048" stroke-width="0.90" stroke-opacity="0.50"/>
<polygon points="349.5,527.6 389.9,536.9 388.8,493.2 348.1,484.4" fill="url(#gr)"/>
<polygon points="578.3,467.1 621.0,475.4 603.0,492.9 559.3,484.1" fill="url(#gy5)" stroke="#623048" stroke-width="0.90" stroke-opacity="0.35"/>
<polygon points="475.6,467.3 516.9,475.6 495.9,493.1 453.7,484.3" fill="url(#gy5)" stroke="#623048" stroke-width="0.90" stroke-opacity="0.35"/>
<polygon points="663.5,527.1 664.9,484.0 647.8,502.0 646.5,546.1" fill="url(#gx5)" stroke="#623048" stroke-width="0.90" stroke-opacity="0.50"/>
<polygon points="621.0,475.4 664.9,484.0 647.8,502.0 603.0,492.9" fill="url(#gy5)" stroke="#623048" stroke-width="0.90" stroke-opacity="0.35"/>
<polygon points="412.7,475.7 453.7,484.3 430.7,502.3 388.8,493.2" fill="url(#gy5)" stroke="#623048" stroke-width="0.90" stroke-opacity="0.35"/>
<polygon points="389.9,536.9 431.4,546.4 430.7,502.3 388.8,493.2" fill="url(#gz5)" stroke="#623048" stroke-width="0.90" stroke-opacity="0.50"/>
<polygon points="389.9,536.9 431.4,546.4 430.7,502.3 388.8,493.2" fill="url(#gr)"/>
<polygon points="516.9,475.6 559.3,484.1 539.3,502.1 495.9,493.1" fill="url(#gy5)" stroke="#623048" stroke-width="0.90" stroke-opacity="0.35"/>
<polygon points="559.3,484.1 603.0,492.9 583.9,511.4 539.3,502.1" fill="url(#gy5)" stroke="#623048" stroke-width="0.90" stroke-opacity="0.35"/>
<polygon points="453.7,484.3 495.9,493.1 473.8,511.6 430.7,502.3" fill="url(#gy5)" stroke="#623048" stroke-width="0.90" stroke-opacity="0.35"/>
<polygon points="431.4,546.4 474.1,556.2 473.8,511.6 430.7,502.3" fill="url(#gz5)" stroke="#623048" stroke-width="0.90" stroke-opacity="0.50"/>
<polygon points="431.4,546.4 474.1,556.2 473.8,511.6 430.7,502.3" fill="url(#gr)"/>
<polygon points="646.5,546.1 647.8,502.0 629.7,520.9 628.6,566.2" fill="url(#gx5)" stroke="#623048" stroke-width="0.90" stroke-opacity="0.50"/>
<polygon points="603.0,492.9 647.8,502.0 629.7,520.9 583.9,511.4" fill="url(#gy5)" stroke="#623048" stroke-width="0.90" stroke-opacity="0.35"/>
<polygon points="495.9,493.1 539.3,502.1 518.1,521.1 473.8,511.6" fill="url(#gy5)" stroke="#623048" stroke-width="0.90" stroke-opacity="0.35"/>
<polygon points="474.1,556.2 517.9,566.3 518.1,521.1 473.8,511.6" fill="url(#gz5)" stroke="#623048" stroke-width="0.90" stroke-opacity="0.50"/>
<polygon points="474.1,556.2 517.9,566.3 518.1,521.1 473.8,511.6" fill="url(#gr)"/>
<polygon points="539.3,502.1 583.9,511.4 563.6,531.0 518.1,521.1" fill="url(#gy5)" stroke="#623048" stroke-width="0.90" stroke-opacity="0.35"/>
<polygon points="517.9,566.3 563.1,576.7 563.6,531.0 518.1,521.1" fill="url(#gz5)" stroke="#623048" stroke-width="0.90" stroke-opacity="0.50"/>
<polygon points="517.9,566.3 563.1,576.7 563.6,531.0 518.1,521.1" fill="url(#gr)"/>
<polygon points="628.6,566.2 629.7,520.9 610.6,541.1 609.6,587.4" fill="url(#gx5)" stroke="#623048" stroke-width="0.90" stroke-opacity="0.50"/>
<polygon points="583.9,511.4 629.7,520.9 610.6,541.1 563.6,531.0" fill="url(#gy5)" stroke="#623048" stroke-width="0.90" stroke-opacity="0.35"/>
<polygon points="563.1,576.7 609.6,587.4 610.6,541.1 563.6,531.0" fill="url(#gz5)" stroke="#623048" stroke-width="0.90" stroke-opacity="0.50"/>
<polygon points="563.1,576.7 609.6,587.4 610.6,541.1 563.6,531.0" fill="url(#gr)"/><line x1="506.0" y1="424.9" x2="506.0" y2="78.6" stroke="#00ff00" stroke-width="3.6"/>
<circle cx="506.0" cy="404.8" r="5.2" fill="#00ff00"/>
<circle cx="506.0" cy="364.2" r="5.2" fill="#00ff00"/>
<circle cx="506.0" cy="323.0" r="5.2" fill="#00ff00"/>
<circle cx="506.0" cy="238.3" r="5.3" fill="#00ff00"/>
<circle cx="506.0" cy="194.9" r="5.4" fill="#00ff00"/>
<circle cx="506.0" cy="150.8" r="5.4" fill="#00ff00"/>
<circle cx="506.0" cy="105.9" r="5.5" fill="#00ff00"/>
<polygon points="492.3,85.6 506.0,37.1 519.7,85.3 519.5,85.9 518.4,86.4 516.4,86.9 513.7,87.2 510.4,87.5 506.9,87.6 503.3,87.6 499.8,87.4 496.9,87.1 494.5,86.6 492.9,86.1" fill="#00ff00"/>
<line x1="320.2" y1="255.1" x2="699.0" y2="307.9" stroke="#ff0000" stroke-width="3.6"/>
<circle cx="355.6" cy="260.0" r="5.0" fill="#ff0000"/>
<circle cx="391.8" cy="265.1" r="5.1" fill="#ff0000"/>
<circle cx="428.9" cy="270.2" r="5.2" fill="#ff0000"/>
<circle cx="467.0" cy="275.6" r="5.2" fill="#ff0000"/>
<circle cx="546.0" cy="286.6" r="5.4" fill="#ff0000"/>
<circle cx="587.1" cy="292.3" r="5.4" fill="#ff0000"/>
<circle cx="629.2" cy="298.2" r="5.5" fill="#ff0000"/>
<circle cx="672.5" cy="304.2" r="5.6" fill="#ff0000"/>
<polygon points="739.5,313.6 694.9,322.5 693.8,322.0 692.8,320.6 692.1,318.3 691.7,315.3 691.7,311.7 692.0,307.8 692.6,303.9 693.6,300.3 694.7,297.2 696.0,294.8 697.3,293.3 698.6,292.8 699.7,293.3" fill="#ff0000"/>
<line x1="534.3" y1="264.9" x2="406.4" y2="337.6" stroke="#0000ff" stroke-width="2.9"/>
<circle cx="525.1" cy="270.1" r="5.2" fill="#0000ff"/>
<circle cx="485.9" cy="292.4" r="5.4" fill="#0000ff"/>
<circle cx="464.7" cy="304.5" r="5.6" fill="#0000ff"/>
<circle cx="442.4" cy="317.2" r="5.7" fill="#0000ff"/>
<polygon points="380.7,353.0 414.0,353.0 423.0,325.0 396.0,325.0" fill="#0000ff"/>
<rect x="501.0" y="276.0" width="10.0" height="10.0" fill="#fff"/><g stroke="#fff" stroke-width="3" stroke-linecap="square"><line x1="427.0" y1="47.1" x2="766.6" y2="69.7"/><line x1="766.6" y1="69.7" x2="619.4" y2="134.9"/><line x1="619.4" y1="134.9" x2="212.0" y2="98.4"/><line x1="427.0" y1="47.1" x2="212.0" y2="98.4"/><line x1="212.0" y1="98.4" x2="234.6" y2="501.1"/><line x1="234.6" y1="501.1" x2="609.6" y2="587.4"/><line x1="619.4" y1="134.9" x2="609.6" y2="587.4"/><line x1="766.6" y1="69.7" x2="748.7" y2="431.7"/><line x1="748.7" y1="431.7" x2="609.6" y2="587.4"/></g></svg>
<!-- tabs -->
<div class="abs" style="left:894px;top:152px;width:1012px;height:2px;background:#000"></div>
<svg class="abs" style="left:900px;top:116px" width="340" height="38" viewBox="900 116 340 38" shape-rendering="crispEdges">
<polygon points="910,124 914,120 914,118 1074,118 1074,152 910,152" fill="#000"/>
<polygon points="912,124 916,120 1074,120 1074,152 912,152" fill="#c2c3c7"/>
<rect x="1068" y="120" width="4" height="4" fill="#5f574f"/>
<polygon points="1076,118 1218,118 1222,124 1222,152 1076,152" fill="#000"/>
<polygon points="1078,120 1216,120 1220,126 1220,152 1078,152" fill="#5f574f"/>
</svg>
<!-- comparison box -->
<div class="abs" style="left:894px;top:504px;width:304px;height:130px;background:#000"></div>
<div class="abs" style="left:896px;top:506px;width:300px;height:126px;background:#c2c3c7"></div>
<div class="abs" style="left:898px;top:508px;width:296px;height:122px;background:#000"></div>
<div class="abs" style="left:900px;top:510px;width:292px;height:118px;background:#fff1e8"></div>
<div class="abs" style="left:900px;top:510px;width:292px;height:22px;background:#29adff"></div>
<!-- view icons -->
<svg class="abs" style="left:1770px;top:505px" width="140" height="30" viewBox="1770 505 140 30" shape-rendering="crispEdges">
<g fill="#5f574f" transform="translate(0,2)">
<path d="M1786 508h2v2h-2zM1782 510h2v2h-2zM1790 510h2v2h-2zM1778 512h2v2h-2zM1794 512h2v2h-2zM1778 516h2v2h-2zM1794 516h2v2h-2zM1778 520h2v2h-2zM1794 520h2v2h-2zM1778 524h2v2h-2zM1794 524h2v2h-2zM1782 526h2v2h-2zM1790 526h2v2h-2zM1786 528h2v2h-2z"/>
</g>
<g fill="#fff1e8">
<path d="M1786 508h2v2h-2zM1782 510h2v2h-2zM1790 510h2v2h-2zM1778 512h2v2h-2zM1794 512h2v2h-2zM1778 516h2v2h-2zM1794 516h2v2h-2zM1778 520h2v2h-2zM1794 520h2v2h-2zM1778 524h2v2h-2zM1794 524h2v2h-2zM1782 526h2v2h-2zM1790 526h2v2h-2zM1786 528h2v2h-2z"/>
</g>
<g fill="#00ff00"><path d="M1818 508h2v2h-2zM1818 512h2v2h-2zM1818 516h2v2h-2zM1818 520h2v2h-2zM1818 524h2v2h-2zM1818 528h2v2h-2z"/></g>
<g fill="#ff004d"><path d="M1808 518h2v2h-2zM1812 518h2v2h-2zM1816 518h2v2h-2zM1822 518h2v2h-2zM1826 518h2v2h-2zM1830 518h2v2h-2z"/></g>
<g fill="#0a3cf0"><path d="M1826 510h2v2h-2zM1822 514h2v2h-2zM1814 522h2v2h-2zM1810 526h2v2h-2z"/></g>
<rect x="1818" y="518" width="2" height="2" fill="#fff"/>
<g fill="#5f574f" transform="translate(0,2)"><path d="M1840 512h2v2h-2zM1844 512h2v2h-2zM1848 512h2v2h-2zM1852 512h2v2h-2zM1856 512h2v2h-2zM1860 512h2v2h-2zM1864 512h2v2h-2zM1840 516h2v2h-2zM1864 516h2v2h-2zM1840 520h2v2h-2zM1864 520h2v2h-2zM1840 524h2v2h-2zM1844 524h2v2h-2zM1848 524h2v2h-2zM1852 524h2v2h-2zM1856 524h2v2h-2zM1860 524h2v2h-2zM1864 524h2v2h-2zM1852 516h2v4h-2z"/></g><g fill="#fff1e8"><path d="M1840 512h2v2h-2zM1844 512h2v2h-2zM1848 512h2v2h-2zM1852 512h2v2h-2zM1856 512h2v2h-2zM1860 512h2v2h-2zM1864 512h2v2h-2zM1840 516h2v2h-2zM1864 516h2v2h-2zM1840 520h2v2h-2zM1864 520h2v2h-2zM1840 524h2v2h-2zM1844 524h2v2h-2zM1848 524h2v2h-2zM1852 524h2v2h-2zM1856 524h2v2h-2zM1860 524h2v2h-2zM1864 524h2v2h-2zM1852 516h2v4h-2z"/></g>
<path d="M1880 508h6v2h-6zM1878 510h2v2h-2zM1876 512h2v10h-2zM1878 522h2v2h-2zM1880 524h2v2h-2zM1884 520h2v10h-2zM1878 528h6v2h-6zM1890 508h6v2h-6zM1890 510h2v4h-2zM1896 510h2v2h-2zM1898 512h2v2h-2zM1898 514h2v10h-2zM1896 524h2v2h-2zM1894 526h2v2h-2zM1890 528h6v2h-6z" fill="#5f574f" transform="translate(0,2)"/><path d="M1880 508h6v2h-6zM1878 510h2v2h-2zM1876 512h2v10h-2zM1878 522h2v2h-2zM1880 524h2v2h-2zM1884 520h2v10h-2zM1878 528h6v2h-6zM1890 508h6v2h-6zM1890 510h2v4h-2zM1896 510h2v2h-2zM1898 512h2v2h-2zM1898 514h2v10h-2zM1896 524h2v2h-2zM1894 526h2v2h-2zM1890 528h6v2h-6z" fill="#fff1e8"/>
</svg>
<div class="t" style="left:20px;top:92.75px;font-size:20.29px;color:#fff1e8;transform:scaleX(0.8077);">RepliCUBE Actions</div>
<div class="t" style="left:1489px;top:12.75px;font-size:20.29px;color:#fff1e8;transform:scaleX(0.9074);">Chill beats to relax&amp;make cubes to</div>
<div class="t" style="left:1797px;top:2.75px;font-size:20.29px;color:#fff1e8;transform:scaleX(0.8232);">THU 2025.1.23</div>
<div class="t" style="left:1837px;top:24.75px;font-size:20.29px;color:#fff1e8;transform:scaleX(0.8440);">08:36 PM</div>
<div class="t" style="left:919px;top:58.75px;font-size:20.29px;color:#000;transform:scaleX(0.7050);-webkit-text-stroke:0.4px #000;">REPLICUBE</div>
<div class="t" style="left:919px;top:128.75px;font-size:20.29px;color:#000;transform:scaleX(0.9275);">Reference Object</div>
<div class="t" style="left:1085px;top:128.75px;font-size:20.29px;color:#2a2520;transform:scaleX(0.9191);">Documentation</div>
<div class="t" style="left:951px;top:510.75px;font-size:20.29px;color:#000;transform:scaleX(0.7887);">COMPARISON RESULTS</div>
<div class="t" style="left:911px;top:540.75px;font-size:20.29px;color:#000;transform:scaleX(0.8812);">Shape Match</div>
<div class="t" style="left:1107px;top:540.75px;font-size:20.29px;color:#000;transform:scaleX(0.8024);">96.16%</div>
<div class="t" style="left:911px;top:570.75px;font-size:20.29px;color:#000;transform:scaleX(0.9465);">Overall Match</div>
<div class="t" style="left:1107px;top:570.75px;font-size:20.29px;color:#000;transform:scaleX(0.8024);">91.36%</div>
<div class="t" style="left:21px;top:956.75px;font-size:20.29px;color:#1e4a8a;transform:scaleX(0.8162);">Code size: 50</div>
<div class="t" style="left:719px;top:956.75px;font-size:20.29px;color:#1e4a8a;transform:scaleX(0.8736);">Cycles / voxel: 7.11</div>
<div class="t" style="left:216px;top:987.75px;font-size:20.29px;color:#000;transform:scaleX(0.8038);">RUN CODE (CTRL+R)</div>
<div class="t" style="left:594px;top:987.75px;font-size:20.29px;color:#000;transform:scaleX(0.8934);">Auto run code as I type</div>
<div class="t" style="left:1599px;top:1030.75px;font-size:20.29px;color:#fff;transform:scaleX(0.9155);text-shadow:1px 0 #14233c,-1px 0 #14233c,0 1px #14233c,0 -1px #14233c,1px 1px #14233c,-1px -1px #14233c,1px -1px #14233c,-1px 1px #14233c,2px 0 #14233c,-2px 0 #14233c,0 2px #14233c,0 -2px #14233c;">Playtest Version 03B (January 2025)</div>
<div class="t" style="left:35.0px;top:1030.75px;font-size:20.29px;color:#000;transform:scaleX(0.800)">1</div>
<div class="t" style="left:89.0px;top:1030.75px;font-size:20.29px;color:#000;transform:scaleX(0.800)">2</div>
<div class="t" style="left:143.0px;top:1030.75px;font-size:20.29px;color:#262626;transform:scaleX(0.800)">3</div>
<div class="t" style="left:197.0px;top:1030.75px;font-size:20.29px;color:#000;transform:scaleX(0.800)">4</div>
<div class="t" style="left:251.0px;top:1030.75px;font-size:20.29px;color:#000;transform:scaleX(0.800)">5</div>
<div class="t" style="left:305.0px;top:1030.75px;font-size:20.29px;color:#000;transform:scaleX(0.800)">6</div>
<div class="t" style="left:359.0px;top:1030.75px;font-size:20.29px;color:#000;transform:scaleX(0.800)">7</div>
<div class="t" style="left:413.0px;top:1030.75px;font-size:20.29px;color:#000;transform:scaleX(0.800)">8</div>
<div class="t" style="left:467.0px;top:1030.75px;font-size:20.29px;color:#000;transform:scaleX(0.800)">9</div>
<div class="t" style="left:516.5px;top:1030.75px;font-size:20.29px;color:#000;transform:scaleX(0.800)">10</div>
<div class="t" style="left:571.1px;top:1030.75px;font-size:20.29px;color:#000;transform:scaleX(0.800)">11</div>
<div class="t" style="left:624.5px;top:1030.75px;font-size:20.29px;color:#000;transform:scaleX(0.800)">12</div>
<div class="t" style="left:678.5px;top:1030.75px;font-size:20.29px;color:#000;transform:scaleX(0.800)">13</div>
<div class="t" style="left:732.5px;top:1030.75px;font-size:20.29px;color:#000;transform:scaleX(0.800)">14</div>
<div class="t" style="left:786.5px;top:1030.75px;font-size:20.29px;color:#000;transform:scaleX(0.800)">15</div>
<div class="t" style="left:841.5px;top:1030.75px;font-size:20.29px;color:#000;transform:scaleX(0.800)">16</div>
</body></html>
